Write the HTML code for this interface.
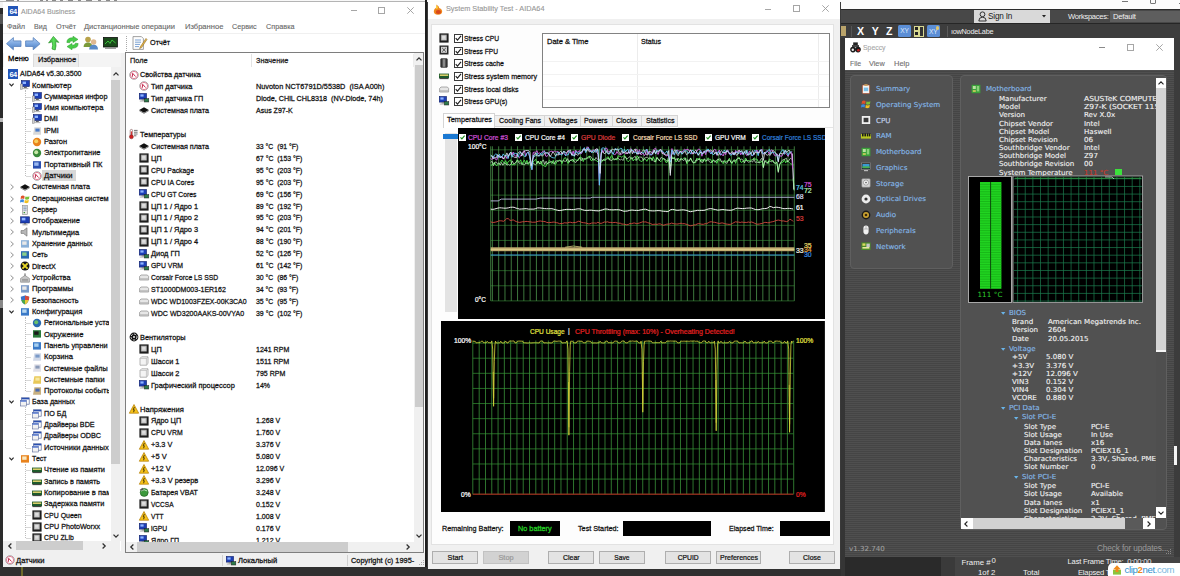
<!DOCTYPE html>
<html lang="ru"><head><meta charset="utf-8"><title>AIDA64 Business</title>
<style>
html,body{margin:0;padding:0;}
body{width:1180px;height:576px;overflow:hidden;background:#3a3a3a;font-family:"Liberation Sans",sans-serif;}
#root{position:relative;width:1180px;height:576px;overflow:hidden;background:#3a3a3a;}
.a{position:absolute;display:block;box-sizing:border-box;white-space:pre;}
span.a{transform-origin:0 50%;}
svg.a{overflow:visible;}
.t{font-size:7.8px;color:#111;-webkit-text-stroke-width:0.26px;}
.tt{font-size:7.9px;color:#979797;-webkit-text-stroke-width:0.12px;}
.tm{font-size:7.9px;color:#686868;-webkit-text-stroke-width:0.12px;}
.ts{font-size:7.8px;color:#111;-webkit-text-stroke-width:0.26px;}
.tb{font-size:7.8px;color:#111;-webkit-text-stroke-width:0.24px;}
.tc{font-size:7.3px;color:#fff;-webkit-text-stroke-width:0.24px;}
.sp{font-family:"DejaVu Sans","Liberation Sans",sans-serif;font-size:6.9px;color:#f2f2f2;-webkit-text-stroke-width:0.12px;}
.spn{font-family:"DejaVu Sans","Liberation Sans",sans-serif;font-size:6.9px;color:#84b6e6;-webkit-text-stroke-width:0.15px;}
.mx{font-size:8.2px;color:#eee;}

</style></head>
<body>
<div id="root">
<div class="a" style="left:0.00px;top:8.00px;width:5.00px;height:568.00px;background:#2c2c2c;"></div>
<div class="a" style="left:0.00px;top:0.00px;width:5.00px;height:8.00px;background:#f4f4f4;"></div>
<div class="a" style="left:0.00px;top:14.00px;width:2.50px;height:10.00px;background:#555;"></div>
<div class="a" style="left:0.00px;top:40.00px;width:2.50px;height:30.00px;background:#1c1c1c;"></div>
<div class="a" style="left:0.00px;top:118.00px;width:2.50px;height:4.00px;background:#bbb;"></div>
<div class="a" style="left:0.00px;top:150.00px;width:2.50px;height:40.00px;background:#3a3a3a;"></div>
<div class="a" style="left:0.00px;top:300.00px;width:2.50px;height:8.00px;background:#888;"></div>
<div class="a" style="left:0.00px;top:420.00px;width:2.50px;height:20.00px;background:#444;"></div>
<div class="a" style="left:0.00px;top:0.00px;width:841.00px;height:2.40px;background:#f8f8f8;"></div>
<div class="a" style="left:0.00px;top:1.20px;width:425.00px;height:0.80px;background:#b4b4b4;"></div>
<div class="a" style="left:6.00px;top:0.00px;width:8.00px;height:1.00px;background:#8a8a8a;"></div>
<div class="a" style="left:17.00px;top:0.00px;width:2.00px;height:1.00px;background:#8a8a8a;"></div>
<div class="a" style="left:40.00px;top:0.00px;width:3.00px;height:1.00px;background:#8a8a8a;"></div>
<div class="a" style="left:46.00px;top:0.00px;width:2.00px;height:1.00px;background:#8a8a8a;"></div>
<div class="a" style="left:52.00px;top:0.00px;width:4.00px;height:1.00px;background:#8a8a8a;"></div>
<div class="a" style="left:60.00px;top:0.00px;width:3.00px;height:1.00px;background:#8a8a8a;"></div>
<div class="a" style="left:68.00px;top:0.00px;width:5.00px;height:1.00px;background:#8a8a8a;"></div>
<div class="a" style="left:78.00px;top:0.00px;width:3.00px;height:1.00px;background:#8a8a8a;"></div>
<div class="a" style="left:86.00px;top:0.00px;width:6.00px;height:1.00px;background:#8a8a8a;"></div>
<div class="a" style="left:98.00px;top:0.00px;width:3.00px;height:1.00px;background:#8a8a8a;"></div>
<div class="a" style="left:106.00px;top:0.00px;width:4.00px;height:1.00px;background:#8a8a8a;"></div>
<div class="a" style="left:114.00px;top:0.00px;width:3.00px;height:1.00px;background:#8a8a8a;"></div>
<div class="a" style="left:0.00px;top:566.60px;width:428.00px;height:10.00px;background:#303030;"></div>
<div class="a" style="left:428.00px;top:568.60px;width:413.00px;height:8.00px;background:#303030;"></div>
<div class="a" style="left:21.40px;top:566.60px;width:1.20px;height:10.00px;background:#6e6a2a;"></div>
<div class="a" style="left:424.90px;top:0.00px;width:2.60px;height:567.00px;background:#1e1e1e;"></div>
<div class="a" style="left:840.50px;top:0.00px;width:340.00px;height:9.40px;background:#fbfbfb;"></div>
<div class="a" style="left:1121.70px;top:1.20px;width:6.30px;height:0.90px;background:#777;"></div>
<div class="a" style="left:1150.00px;top:-1.00px;width:5.60px;height:5.00px;border:0.9px solid #777;border-radius:0 0 1px 1px;"></div>
<div class="a" style="left:1178.60px;top:2.60px;width:3.00px;height:0.90px;background:#777;"></div>
<div class="a" style="left:840.50px;top:9.40px;width:340.00px;height:14.20px;background:#484848;border-top:1.2px solid #2a2a2a;border-bottom:1.2px solid #262626;"></div>
<div class="a" style="left:974.40px;top:9.60px;width:75.60px;height:13.40px;background:#d9d9d9;"></div>
<svg class="a" style="left:977.50px;top:11.00px;" width="9" height="11" viewBox="0 0 9 11"><circle cx="4.5" cy="3.3" r="2.4" fill="none" stroke="#222" stroke-width="0.9"/><path d="M0.8 10 Q0.8 6.2 4.5 6.2 Q8.2 6.2 8.2 10 Z" fill="none" stroke="#222" stroke-width="0.9"/></svg>
<span class="a mx" style="left:988.00px;top:10.60px;line-height:12px;color:#1a1a1a;font-size:8.2px;letter-spacing:-0.2px;">Sign In</span>
<svg class="a" style="left:1041.50px;top:15.00px;" width="4" height="3" viewBox="0 0 4 3"><path d="M0 0 L4 0 L2 2.6 Z" fill="#222"/></svg>
<span class="a mx" style="left:1068.00px;top:10.60px;line-height:12px;color:#f2f2f2;font-size:7.6px;letter-spacing:-0.3px;">Workspaces:</span>
<div class="a" style="left:1109.70px;top:10.60px;width:71.00px;height:11.80px;background:#5e5e5e;"></div>
<span class="a mx" style="left:1113.00px;top:10.60px;line-height:12px;color:#f2f2f2;font-size:7.6px;letter-spacing:-0.2px;">Default</span>
<div class="a" style="left:840.50px;top:23.60px;width:340.00px;height:14.60px;background:#3d3d3d;"></div>
<div class="a" style="left:840.50px;top:26.00px;width:5.00px;height:10.00px;background:#b9a36a;"></div>
<div class="a" style="left:850.50px;top:25.50px;width:1.20px;height:11.50px;background:#555;"></div>
<span class="a mx" style="left:857.00px;top:25.30px;line-height:12px;color:#fff;font-size:10.6px;font-weight:bold;">X</span>
<span class="a mx" style="left:871.80px;top:25.30px;line-height:12px;color:#fff;font-size:10.6px;font-weight:bold;">Y</span>
<span class="a mx" style="left:886.00px;top:25.30px;line-height:12px;color:#fff;font-size:10.6px;font-weight:bold;">Z</span>
<div class="a" style="left:898.00px;top:25.00px;width:13.00px;height:12.40px;background:#5b8ed6;border-radius:1.5px;"></div>
<span class="a mx" style="left:900.30px;top:25.40px;line-height:12px;color:#dfe9fa;font-size:6.6px;letter-spacing:-0.2px;">XY</span>
<div class="a" style="left:913.60px;top:25.60px;width:10.40px;height:11.20px;background:#d8d890;"></div>
<div class="a" style="left:915.00px;top:27.00px;width:3.00px;height:3.00px;background:#222;"></div>
<div class="a" style="left:915.00px;top:32.00px;width:3.00px;height:3.00px;background:#222;"></div>
<div class="a" style="left:919.60px;top:26.60px;width:3.40px;height:9.20px;background:#333;"></div>
<div class="a" style="left:927.00px;top:25.00px;width:13.00px;height:12.40px;background:#5b8ed6;border-radius:1.5px;"></div>
<span class="a mx" style="left:929.00px;top:25.60px;line-height:12px;color:#dfe9fa;font-size:6.6px;letter-spacing:-0.2px;">XY</span>
<div class="a" style="left:935.50px;top:26.00px;width:3.60px;height:4.00px;background:#e2c46a;border-radius:2px;"></div>
<div class="a" style="left:947.00px;top:25.60px;width:1.20px;height:11.40px;background:#5a5a5a;"></div>
<span class="a mx" style="left:951.00px;top:26.00px;line-height:12px;color:#eee;font-size:7.3px;letter-spacing:-0.25px;">ıowNodeLabe</span>
<div class="a" style="left:840.50px;top:38.20px;width:4.60px;height:538.00px;background:#353535;"></div>
<div class="a" style="left:1174.30px;top:38.20px;width:6.00px;height:538.00px;background:#3c3c3c;"></div>
<div class="a" style="left:1174.40px;top:446.00px;width:2.60px;height:18.50px;background:#f4f4f4;"></div>
<div class="a" style="left:845.00px;top:557.00px;width:96.00px;height:19.00px;background:#2a2a2a;"></div>
<div class="a" style="left:941.00px;top:557.00px;width:14.00px;height:19.00px;background:#3a3a3a;"></div>
<div class="a" style="left:955.00px;top:557.00px;width:225.00px;height:19.00px;background:#444;"></div>
<span class="a mx" style="left:961.50px;top:556.60px;line-height:12px;color:#f0f0f0;font-size:7.8px;">Frame #</span>
<span class="a mx" style="left:991.50px;top:555.40px;line-height:12px;color:#f0f0f0;font-size:7.8px;">0</span>
<span class="a mx" style="left:978.00px;top:567.00px;line-height:12px;color:#f0f0f0;font-size:7.8px;">1of 2</span>
<span class="a mx" style="left:1023.00px;top:566.60px;line-height:12px;color:#f0f0f0;font-size:7.8px;">Total</span>
<span class="a mx" style="left:1067.60px;top:555.60px;line-height:12px;color:#f0f0f0;font-size:7.6px;letter-spacing:-0.2px;">Last Frame Time:  0:00:00</span>
<span class="a mx" style="left:1078.00px;top:567.00px;line-height:12px;color:#f0f0f0;font-size:7.6px;letter-spacing:-0.2px;">Elapsed T</span>
<div class="a" style="left:1107.80px;top:563.00px;width:73.00px;height:13.00px;background:#fff;border-radius:5px 0 0 0;"></div>
<svg class="a" style="left:1112.00px;top:564.50px;" width="10" height="10" viewBox="0 0 10 10"><rect x="1" y="5" width="8" height="4.6" fill="#8cc43c"/><path d="M5 0.2 L9 4.4 L6.4 4.4 L6.4 7 L3.6 7 L3.6 4.4 L1 4.4 Z" fill="#f08a1c"/></svg>
<span class="a" style="left:1124.5px;top:564.6px;line-height:10px;font-size:9.6px;letter-spacing:-0.35px;color:#2d8fd0;">clip<b style="color:#f08a1c">2</b>net<span style="color:#7ab8e0">.com</span></span>
<div class="a" style="left:3.20px;top:2.00px;width:421.70px;height:564.60px;background:#ffffff;"></div>
<svg class="a" style="left:7.50px;top:6.00px;" width="10" height="10" viewBox="0 0 10 10"><rect x="0" y="0" width="10" height="10" fill="#2456b8"/><text x="5" y="7.9" font-family="Liberation Sans,sans-serif" font-weight="bold" font-size="7.4" fill="#fff" text-anchor="middle" letter-spacing="-0.5">64</text></svg>
<span class="a tt" style="left:21.00px;top:5.60px;line-height:12px;transform:scaleX(0.885);">AIDA64 Business</span>
<div class="a" style="left:350.60px;top:10.40px;width:6.00px;height:0.90px;background:#a6a6a6;"></div>
<div class="a" style="left:378.00px;top:7.00px;width:6.60px;height:6.60px;border:0.9px solid #a6a6a6;"></div>
<svg class="a" style="left:407.00px;top:7.00px;" width="7" height="7" viewBox="0 0 7 7"><path d="M0.3 0.3 L6.7 6.7 M6.7 0.3 L0.3 6.7" stroke="#9c9c9c" stroke-width="0.9"/></svg>
<span class="a tm" style="left:7.00px;top:21.00px;line-height:12px;transform:scaleX(0.935);">Файл</span>
<span class="a tm" style="left:34.00px;top:21.00px;line-height:12px;transform:scaleX(0.896);">Вид</span>
<span class="a tm" style="left:55.70px;top:21.00px;line-height:12px;transform:scaleX(0.921);">Отчёт</span>
<span class="a tm" style="left:84.00px;top:21.00px;line-height:12px;transform:scaleX(0.954);">Дистанционные операции</span>
<span class="a tm" style="left:184.70px;top:21.00px;line-height:12px;transform:scaleX(0.959);">Избранное</span>
<span class="a tm" style="left:232.40px;top:21.00px;line-height:12px;transform:scaleX(0.911);">Сервис</span>
<span class="a tm" style="left:266.00px;top:21.00px;line-height:12px;transform:scaleX(0.922);">Справка</span>
<div class="a" style="left:3.20px;top:32.60px;width:421.70px;height:0.80px;background:#f0f0f0;"></div>
<svg class="a" style="left:0;top:0" width="0" height="0"><defs><linearGradient id="gb" x1="0" y1="0" x2="0" y2="1"><stop offset="0" stop-color="#b4d0f4"/><stop offset="0.5" stop-color="#7aa6e0"/><stop offset="1" stop-color="#4a7cc0"/></linearGradient><linearGradient id="gg" x1="0" y1="0" x2="1" y2="0"><stop offset="0" stop-color="#2fae2f"/><stop offset="0.5" stop-color="#5ce05c"/><stop offset="1" stop-color="#2a9a2a"/></linearGradient></defs></svg>
<svg class="a" style="left:5.80px;top:36.60px;" width="15.6" height="13.4" viewBox="0 0 15.6 13.4"><path d="M0.5 6.7 L7.4 0.6 L7.4 3.9 L15 3.9 L15 9.5 L7.4 9.5 L7.4 12.8 Z" fill="url(#gb)" stroke="#5580bc" stroke-width="0.8" stroke-linejoin="round"/></svg>
<svg class="a" style="left:24.80px;top:36.60px;" width="15.6" height="13.4" viewBox="0 0 15.6 13.4"><path d="M15.1 6.7 L8.2 0.6 L8.2 3.9 L0.6 3.9 L0.6 9.5 L8.2 9.5 L8.2 12.8 Z" fill="url(#gb)" stroke="#5580bc" stroke-width="0.8" stroke-linejoin="round"/></svg>
<svg class="a" style="left:47.60px;top:36.00px;" width="12" height="14.4" viewBox="0 0 12 14.4"><path d="M5.4 0.4 L10.8 6.4 L7.6 5.6 Q8.6 10 7.2 14 L4 13 Q5.2 9.4 4.2 5.8 L0.6 7 Z" fill="url(#gg)" stroke="#2a962a" stroke-width="0.7" stroke-linejoin="round"/></svg>
<svg class="a" style="left:65.50px;top:36.00px;" width="13" height="14" viewBox="0 0 13 14"><path d="M0.8 6.4 Q1.2 1.4 7 1.8 L7 0.2 L12 3.4 L7 6.6 L7 4.8 Q3.8 4.6 3.6 6.8 Z" fill="#48cc48" stroke="#2a9a2a" stroke-width="0.5"/><path d="M12.2 7.6 Q11.8 12.6 6 12.2 L6 13.8 L1 10.6 L6 7.4 L6 9.2 Q9.2 9.4 9.4 7.2 Z" fill="#48cc48" stroke="#2a9a2a" stroke-width="0.5"/></svg>
<svg class="a" style="left:83.00px;top:36.00px;" width="16" height="14" viewBox="0 0 16 14"><circle cx="5" cy="3.6" r="2.8" fill="#b8a24a"/><path d="M0.6 11 Q0.6 6.4 5 6.4 Q9.4 6.4 9.4 11 Z" fill="#7a9a3a"/><circle cx="10.6" cy="6" r="2.7" fill="#e0b890"/><path d="M6.2 13.6 Q6.2 8.8 10.6 8.8 Q15 8.8 15 13.6 Z" fill="#5a8ac8"/></svg>
<svg class="a" style="left:103.00px;top:37.00px;" width="15" height="12" viewBox="0 0 15 12"><rect x="0.4" y="0.4" width="14" height="9.6" fill="#1a4a1a" stroke="#111" stroke-width="0.8"/><path d="M2 7 L5 4 L7 6.4 L9 3 L12.6 6" fill="none" stroke="#3fd03f" stroke-width="0.9"/><rect x="2" y="10.4" width="11" height="1.4" fill="#888"/></svg>
<div class="a" style="left:125.60px;top:36.40px;width:0.90px;height:0.90px;background:#aaa;"></div>
<div class="a" style="left:125.60px;top:38.30px;width:0.90px;height:0.90px;background:#aaa;"></div>
<div class="a" style="left:125.60px;top:40.20px;width:0.90px;height:0.90px;background:#aaa;"></div>
<div class="a" style="left:125.60px;top:42.10px;width:0.90px;height:0.90px;background:#aaa;"></div>
<div class="a" style="left:125.60px;top:44.00px;width:0.90px;height:0.90px;background:#aaa;"></div>
<div class="a" style="left:125.60px;top:45.90px;width:0.90px;height:0.90px;background:#aaa;"></div>
<div class="a" style="left:125.60px;top:47.80px;width:0.90px;height:0.90px;background:#aaa;"></div>
<div class="a" style="left:125.60px;top:49.70px;width:0.90px;height:0.90px;background:#aaa;"></div>
<svg class="a" style="left:132.00px;top:36.00px;" width="15" height="14" viewBox="0 0 15 14"><path d="M1 0.6 L9.4 0.6 L11.4 2.6 L11.4 13.4 L1 13.4 Z" fill="#fdfdfd" stroke="#8a8a8a" stroke-width="0.8"/><path d="M3 4 h6 M3 6.2 h6 M3 8.4 h5 M3 10.6 h4" stroke="#5a8ac8" stroke-width="0.8"/><path d="M14 2.4 L8.4 10.6 L7.6 12.6 L9.6 11.6 L15 3.4 Z" fill="#e8b848" stroke="#7a5a1a" stroke-width="0.5"/></svg>
<span class="a t" style="left:150.00px;top:37.00px;line-height:12px;transform:scaleX(0.929);">Отчёт</span>
<div class="a" style="left:3.20px;top:52.60px;width:121.40px;height:14.00px;background:#f4f4f4;"></div>
<div class="a" style="left:3.60px;top:52.60px;width:29.60px;height:14.00px;background:#ffffff;"></div>
<div class="a" style="left:33.20px;top:53.60px;width:46.00px;height:13.00px;background:#ececec;border:0.8px solid #dcdcdc;border-bottom:none;"></div>
<span class="a t" style="left:8.00px;top:53.40px;line-height:12px;color:#000;transform:scaleX(0.979);">Меню</span>
<span class="a t" style="left:38.00px;top:53.80px;line-height:12px;color:#111;transform:scaleX(0.967);">Избранное</span>
<div class="a" style="left:120.60px;top:52.60px;width:4.80px;height:501.00px;background:#f0f0f0;"></div>
<div class="a" style="left:3.20px;top:66.60px;width:107.60px;height:474.40px;background:#ffffff;"></div>
<div class="a" style="left:3.6px;top:66.6px;width:105.9px;height:474.6px;overflow:hidden;">
<svg class="a" style="left:4.00px;top:2.40px;" width="10" height="10" viewBox="0 0 10 10"><rect x="0" y="0" width="10" height="10" fill="#2456b8"/><text x="5" y="7.9" font-family="Liberation Sans,sans-serif" font-weight="bold" font-size="7.4" fill="#fff" text-anchor="middle" letter-spacing="-0.5">64</text></svg>
<span class="a ts" style="left:16.20px;top:1.60px;line-height:12px;transform:scaleX(0.91);">AIDA64 v5.30.3500</span>
<svg class="a" style="left:16.60px;top:13.72px;" width="10" height="10" viewBox="0 0 10 10"><rect x="1.4" y="0.6" width="8" height="6" fill="#1d3fb5" stroke="#0b1b66" stroke-width="0.6"/><rect x="2.6" y="1.6" width="3.4" height="2.4" fill="#8fb4ff"/><rect x="3.8" y="6.8" width="3" height="1.2" fill="#666"/><rect x="0.2" y="4" width="2.4" height="5.4" fill="#cfcfcf" stroke="#777" stroke-width="0.4"/><rect x="2.4" y="8.2" width="6" height="0.9" fill="#aaa"/></svg>
<svg class="a" style="left:5.80px;top:16.72px;" width="5" height="4" viewBox="0 0 5 4"><path d="M0.4 0.6 L2.5 3 L4.6 0.6" fill="none" stroke="#2a2a2a" stroke-width="1.15"/></svg>
<span class="a ts" style="left:28.50px;top:12.92px;line-height:12px;transform:scaleX(0.978);">Компьютер</span>
<div class="a" style="left:22.60px;top:30.04px;width:5.00px;height:0.70px;background:#d8d8d8;"></div>
<svg class="a" style="left:28.60px;top:25.04px;" width="10" height="10" viewBox="0 0 10 10"><rect x="1.4" y="0.6" width="8" height="6" fill="#1d3fb5" stroke="#0b1b66" stroke-width="0.6"/><rect x="2.6" y="1.6" width="3.4" height="2.4" fill="#8fb4ff"/><rect x="3.8" y="6.8" width="3" height="1.2" fill="#666"/><rect x="0.2" y="4" width="2.4" height="5.4" fill="#cfcfcf" stroke="#777" stroke-width="0.4"/><rect x="2.4" y="8.2" width="6" height="0.9" fill="#aaa"/></svg>
<span class="a ts" style="left:40.50px;top:24.24px;line-height:12px;transform:scaleX(0.939);">Суммарная инфор</span>
<div class="a" style="left:22.60px;top:41.36px;width:5.00px;height:0.70px;background:#d8d8d8;"></div>
<svg class="a" style="left:28.60px;top:36.36px;" width="10" height="10" viewBox="0 0 10 10"><rect x="1.4" y="0.6" width="8" height="6" fill="#1d3fb5" stroke="#0b1b66" stroke-width="0.6"/><rect x="2.6" y="1.6" width="3.4" height="2.4" fill="#8fb4ff"/><rect x="3.8" y="6.8" width="3" height="1.2" fill="#666"/><rect x="0.2" y="4" width="2.4" height="5.4" fill="#cfcfcf" stroke="#777" stroke-width="0.4"/><rect x="2.4" y="8.2" width="6" height="0.9" fill="#aaa"/></svg>
<span class="a ts" style="left:40.50px;top:35.56px;line-height:12px;transform:scaleX(0.974);">Имя компьютера</span>
<div class="a" style="left:22.60px;top:52.68px;width:5.00px;height:0.70px;background:#d8d8d8;"></div>
<svg class="a" style="left:28.60px;top:47.68px;" width="10" height="10" viewBox="0 0 10 10"><rect x="1.4" y="0.6" width="8" height="6" fill="#1d3fb5" stroke="#0b1b66" stroke-width="0.6"/><rect x="2.6" y="1.6" width="3.4" height="2.4" fill="#8fb4ff"/><rect x="3.8" y="6.8" width="3" height="1.2" fill="#666"/><rect x="0.2" y="4" width="2.4" height="5.4" fill="#cfcfcf" stroke="#777" stroke-width="0.4"/><rect x="2.4" y="8.2" width="6" height="0.9" fill="#aaa"/></svg>
<span class="a ts" style="left:40.50px;top:46.88px;line-height:12px;transform:scaleX(0.968);">DMI</span>
<div class="a" style="left:22.60px;top:64.00px;width:5.00px;height:0.70px;background:#d8d8d8;"></div>
<svg class="a" style="left:28.60px;top:59.00px;" width="10" height="10" viewBox="0 0 10 10"><path d="M1 8.8 L2.4 1.2 L9 1.2 L9 8.8 Z" fill="#d8d8d8"/><rect x="3.4" y="2.6" width="4.2" height="3" fill="#4a7ac8"/></svg>
<span class="a ts" style="left:40.50px;top:58.20px;line-height:12px;transform:scaleX(0.921);">IPMI</span>
<div class="a" style="left:22.60px;top:75.32px;width:5.00px;height:0.70px;background:#d8d8d8;"></div>
<svg class="a" style="left:28.60px;top:70.32px;" width="10" height="10" viewBox="0 0 10 10"><circle cx="5" cy="5" r="4.2" fill="#e8821c"/><circle cx="4.2" cy="4.2" r="2" fill="#f8d060"/></svg>
<span class="a ts" style="left:40.50px;top:69.52px;line-height:12px;transform:scaleX(0.959);">Разгон</span>
<div class="a" style="left:22.60px;top:86.64px;width:5.00px;height:0.70px;background:#d8d8d8;"></div>
<svg class="a" style="left:28.60px;top:81.64px;" width="10" height="10" viewBox="0 0 10 10"><circle cx="5" cy="5" r="4.2" fill="#3a8a3a"/><circle cx="4.2" cy="4.2" r="2" fill="#c8e8a8"/></svg>
<span class="a ts" style="left:40.50px;top:80.84px;line-height:12px;transform:scaleX(0.95);">Электропитание</span>
<div class="a" style="left:22.60px;top:97.96px;width:5.00px;height:0.70px;background:#d8d8d8;"></div>
<svg class="a" style="left:28.60px;top:92.96px;" width="10" height="10" viewBox="0 0 10 10"><rect x="1" y="1.2" width="8" height="7.4" fill="#2a4fb0"/><rect x="2.2" y="2.4" width="4.4" height="3.4" fill="#9ab8f0"/></svg>
<span class="a ts" style="left:40.50px;top:92.16px;line-height:12px;transform:scaleX(0.968);">Портативный ПК</span>
<div class="a" style="left:38.90px;top:103.48px;width:33.40px;height:11.40px;background:#d8d8d8;"></div>
<div class="a" style="left:22.60px;top:109.28px;width:5.00px;height:0.70px;background:#d8d8d8;"></div>
<svg class="a" style="left:28.60px;top:104.28px;" width="10" height="10" viewBox="0 0 10 10"><circle cx="5" cy="5" r="4.35" fill="#fff" stroke="#7a7a7a" stroke-width="0.6"/><circle cx="5" cy="5" r="3.6" fill="none" stroke="#e0708a" stroke-width="0.9"/><path d="M3.3 6.8 L3.7 3.3 L6.5 6.5" fill="none" stroke="#c02044" stroke-width="0.95" stroke-linejoin="round"/></svg>
<span class="a ts" style="left:40.50px;top:103.48px;line-height:12px;transform:scaleX(0.979);">Датчики</span>
<svg class="a" style="left:16.60px;top:115.60px;" width="10" height="10" viewBox="0 0 10 10"><path d="M0.2 5 L5 2.2 L9.8 5 L5 7.8 Z" fill="#111"/><path d="M0.2 5.6 L5 8.4 L9.8 5.6" fill="none" stroke="#555" stroke-width="0.7"/></svg>
<svg class="a" style="left:6.20px;top:117.60px;" width="4.4" height="6" viewBox="0 0 4.4 6"><path d="M0.6 0.4 L3.4 3 L0.6 5.6" fill="none" stroke="#8c8c8c" stroke-width="1"/></svg>
<span class="a ts" style="left:28.50px;top:114.80px;line-height:12px;transform:scaleX(0.921);">Системная плата</span>
<svg class="a" style="left:16.60px;top:126.92px;" width="10" height="10" viewBox="0 0 10 10"><path d="M1 2.2 Q3 1 4.6 2.2 L4.2 5 Q2.6 3.8 0.6 5 Z" fill="#e0502a"/><path d="M5.4 2.4 Q7.4 3.4 9.4 2.2 L9 5 Q7 6.2 5 5.2 Z" fill="#7ac03a"/><path d="M0.4 5.8 Q2.4 4.6 4 5.8 L3.6 8.6 Q2 7.4 0 8.6 Z" fill="#3a8ae0"/><path d="M4.8 6 Q6.8 7 8.8 5.8 L8.4 8.6 Q6.4 9.8 4.4 8.8 Z" fill="#f0c020"/></svg>
<svg class="a" style="left:6.20px;top:128.92px;" width="4.4" height="6" viewBox="0 0 4.4 6"><path d="M0.6 0.4 L3.4 3 L0.6 5.6" fill="none" stroke="#8c8c8c" stroke-width="1"/></svg>
<span class="a ts" style="left:28.50px;top:126.12px;line-height:12px;transform:scaleX(0.944);">Операционная систем</span>
<svg class="a" style="left:16.60px;top:138.24px;" width="10" height="10" viewBox="0 0 10 10"><rect x="2.6" y="0.4" width="4.8" height="9.2" fill="#e4e4e4" stroke="#8a8a8a" stroke-width="0.6"/><path d="M3.4 2 h3.2 M3.4 3.6 h3.2 M3.4 5.2 h3.2" stroke="#6a8ab0" stroke-width="0.7"/><rect x="3.6" y="7" width="1.4" height="1.2" fill="#3a9a3a"/></svg>
<svg class="a" style="left:6.20px;top:140.24px;" width="4.4" height="6" viewBox="0 0 4.4 6"><path d="M0.6 0.4 L3.4 3 L0.6 5.6" fill="none" stroke="#8c8c8c" stroke-width="1"/></svg>
<span class="a ts" style="left:28.50px;top:137.44px;line-height:12px;transform:scaleX(0.927);">Сервер</span>
<svg class="a" style="left:16.60px;top:149.56px;" width="10" height="10" viewBox="0 0 10 10"><rect x="0.6" y="0.8" width="8.8" height="6.2" fill="#1d3fb5" stroke="#0b1b66" stroke-width="0.6"/><rect x="1.8" y="1.8" width="3.6" height="2.6" fill="#8fb4ff"/><rect x="3.8" y="7.2" width="2.4" height="1.2" fill="#666"/><rect x="2.4" y="8.4" width="5.2" height="0.9" fill="#999"/></svg>
<svg class="a" style="left:6.20px;top:151.56px;" width="4.4" height="6" viewBox="0 0 4.4 6"><path d="M0.6 0.4 L3.4 3 L0.6 5.6" fill="none" stroke="#8c8c8c" stroke-width="1"/></svg>
<span class="a ts" style="left:28.50px;top:148.76px;line-height:12px;transform:scaleX(0.965);">Отображение</span>
<svg class="a" style="left:16.60px;top:160.88px;" width="10" height="10" viewBox="0 0 10 10"><path d="M1 3.6 L3.4 3.6 L7 0.8 L7 9.2 L3.4 6.4 L1 6.4 Z" fill="#b8b8b8" stroke="#6a6a6a" stroke-width="0.6"/></svg>
<svg class="a" style="left:6.20px;top:162.88px;" width="4.4" height="6" viewBox="0 0 4.4 6"><path d="M0.6 0.4 L3.4 3 L0.6 5.6" fill="none" stroke="#8c8c8c" stroke-width="1"/></svg>
<span class="a ts" style="left:28.50px;top:160.08px;line-height:12px;transform:scaleX(0.964);">Мультимедиа</span>
<svg class="a" style="left:16.60px;top:172.20px;" width="10" height="10" viewBox="0 0 10 10"><rect x="1" y="1.2" width="8" height="7.4" fill="#8ab0d8"/><rect x="2.2" y="2.4" width="4.4" height="3.4" fill="#e8e8e8"/></svg>
<svg class="a" style="left:6.20px;top:174.20px;" width="4.4" height="6" viewBox="0 0 4.4 6"><path d="M0.6 0.4 L3.4 3 L0.6 5.6" fill="none" stroke="#8c8c8c" stroke-width="1"/></svg>
<span class="a ts" style="left:28.50px;top:171.40px;line-height:12px;transform:scaleX(0.935);">Хранение данных</span>
<svg class="a" style="left:16.60px;top:183.52px;" width="10" height="10" viewBox="0 0 10 10"><rect x="1" y="1.2" width="8" height="7.4" fill="#2a6ab0"/><rect x="2.2" y="2.4" width="4.4" height="3.4" fill="#8ad08a"/></svg>
<svg class="a" style="left:6.20px;top:185.52px;" width="4.4" height="6" viewBox="0 0 4.4 6"><path d="M0.6 0.4 L3.4 3 L0.6 5.6" fill="none" stroke="#8c8c8c" stroke-width="1"/></svg>
<span class="a ts" style="left:28.50px;top:182.72px;line-height:12px;transform:scaleX(0.906);">Сеть</span>
<svg class="a" style="left:16.60px;top:194.84px;" width="10" height="10" viewBox="0 0 10 10"><circle cx="5" cy="5" r="4.5" fill="#151515"/><path d="M2.4 2.4 L7.6 7.6 M7.6 2.4 L2.4 7.6" stroke="#e8d828" stroke-width="1.9"/></svg>
<svg class="a" style="left:6.20px;top:196.84px;" width="4.4" height="6" viewBox="0 0 4.4 6"><path d="M0.6 0.4 L3.4 3 L0.6 5.6" fill="none" stroke="#8c8c8c" stroke-width="1"/></svg>
<span class="a ts" style="left:28.50px;top:194.04px;line-height:12px;transform:scaleX(0.93);">DirectX</span>
<svg class="a" style="left:16.60px;top:206.16px;" width="10" height="10" viewBox="0 0 10 10"><path d="M0.6 9.2 L0.6 5.4 L5 2.4 L9.4 5.4 L9.4 9.2 Z" fill="#c8c8c8" stroke="#777" stroke-width="0.6"/><rect x="4.4" y="0.4" width="1.2" height="2.4" fill="#777"/><path d="M2 6.4 h6 M2 7.8 h6" stroke="#777" stroke-width="0.6"/></svg>
<svg class="a" style="left:6.20px;top:208.16px;" width="4.4" height="6" viewBox="0 0 4.4 6"><path d="M0.6 0.4 L3.4 3 L0.6 5.6" fill="none" stroke="#8c8c8c" stroke-width="1"/></svg>
<span class="a ts" style="left:28.50px;top:205.36px;line-height:12px;transform:scaleX(0.945);">Устройства</span>
<svg class="a" style="left:16.60px;top:217.48px;" width="10" height="10" viewBox="0 0 10 10"><rect x="1" y="1.2" width="8" height="7.4" fill="#7a9ac8"/><rect x="2.2" y="2.4" width="4.4" height="3.4" fill="#e8e8e8"/></svg>
<svg class="a" style="left:6.20px;top:219.48px;" width="4.4" height="6" viewBox="0 0 4.4 6"><path d="M0.6 0.4 L3.4 3 L0.6 5.6" fill="none" stroke="#8c8c8c" stroke-width="1"/></svg>
<span class="a ts" style="left:28.50px;top:216.68px;line-height:12px;transform:scaleX(0.979);">Программы</span>
<svg class="a" style="left:16.60px;top:228.80px;" width="10" height="10" viewBox="0 0 10 10"><path d="M5 0.6 L9.2 1.8 Q9.2 7.4 5 9.6 Q0.8 7.4 0.8 1.8 Z" fill="#3a72c8"/><path d="M5 0.6 L9.2 1.8 Q9.2 3.8 8.8 5 L5 5 Z" fill="#d84a3a"/><path d="M5 5 L8.8 5 Q8 8 5 9.6 Z" fill="#e8c838"/><path d="M5 5 L1.2 5 Q2 8 5 9.6 Z" fill="#4aa84a"/></svg>
<svg class="a" style="left:6.20px;top:230.80px;" width="4.4" height="6" viewBox="0 0 4.4 6"><path d="M0.6 0.4 L3.4 3 L0.6 5.6" fill="none" stroke="#8c8c8c" stroke-width="1"/></svg>
<span class="a ts" style="left:28.50px;top:228.00px;line-height:12px;transform:scaleX(0.937);">Безопасность</span>
<svg class="a" style="left:16.60px;top:240.12px;" width="10" height="10" viewBox="0 0 10 10"><rect x="1" y="1.2" width="8" height="7.4" fill="#3a7ac8"/><rect x="2.2" y="2.4" width="4.4" height="3.4" fill="#b8d8f0"/></svg>
<svg class="a" style="left:5.80px;top:243.12px;" width="5" height="4" viewBox="0 0 5 4"><path d="M0.4 0.6 L2.5 3 L4.6 0.6" fill="none" stroke="#2a2a2a" stroke-width="1.15"/></svg>
<span class="a ts" style="left:28.50px;top:239.32px;line-height:12px;transform:scaleX(0.96);">Конфигурация</span>
<div class="a" style="left:22.60px;top:256.44px;width:5.00px;height:0.70px;background:#d8d8d8;"></div>
<svg class="a" style="left:28.60px;top:251.44px;" width="10" height="10" viewBox="0 0 10 10"><circle cx="5" cy="5" r="4.2" fill="#2a6ab0"/><circle cx="4.2" cy="4.2" r="2" fill="#6ac06a"/></svg>
<span class="a ts" style="left:40.50px;top:250.64px;line-height:12px;transform:scaleX(0.939);">Региональные уста</span>
<div class="a" style="left:22.60px;top:267.76px;width:5.00px;height:0.70px;background:#d8d8d8;"></div>
<svg class="a" style="left:28.60px;top:262.76px;" width="10" height="10" viewBox="0 0 10 10"><rect x="1" y="1.2" width="8" height="7.4" fill="#2a7a3a"/><rect x="2.2" y="2.4" width="4.4" height="3.4" fill="#1a1a1a"/></svg>
<span class="a ts" style="left:40.50px;top:261.96px;line-height:12px;transform:scaleX(0.978);">Окружение</span>
<div class="a" style="left:22.60px;top:279.08px;width:5.00px;height:0.70px;background:#d8d8d8;"></div>
<svg class="a" style="left:28.60px;top:274.08px;" width="10" height="10" viewBox="0 0 10 10"><rect x="1" y="1.2" width="8" height="7.4" fill="#3a7ac8"/><rect x="2.2" y="2.4" width="4.4" height="3.4" fill="#a8d0f0"/></svg>
<span class="a ts" style="left:40.50px;top:273.28px;line-height:12px;transform:scaleX(0.943);">Панель управлени</span>
<div class="a" style="left:22.60px;top:290.40px;width:5.00px;height:0.70px;background:#d8d8d8;"></div>
<svg class="a" style="left:28.60px;top:285.40px;" width="10" height="10" viewBox="0 0 10 10"><path d="M1 8.8 L2.4 1.2 L9 1.2 L9 8.8 Z" fill="#d0d8e8"/><rect x="3.4" y="2.6" width="4.2" height="3" fill="#7a9ac8"/></svg>
<span class="a ts" style="left:40.50px;top:284.60px;line-height:12px;transform:scaleX(0.971);">Корзина</span>
<div class="a" style="left:22.60px;top:301.72px;width:5.00px;height:0.70px;background:#d8d8d8;"></div>
<svg class="a" style="left:28.60px;top:296.72px;" width="10" height="10" viewBox="0 0 10 10"><path d="M1 8.8 L2.4 1.2 L9 1.2 L9 8.8 Z" fill="#e0e0e8"/><rect x="3.4" y="2.6" width="4.2" height="3" fill="#8a9ab8"/></svg>
<span class="a ts" style="left:40.50px;top:295.92px;line-height:12px;transform:scaleX(0.926);">Системные файлы</span>
<div class="a" style="left:22.60px;top:313.04px;width:5.00px;height:0.70px;background:#d8d8d8;"></div>
<svg class="a" style="left:28.60px;top:308.04px;" width="10" height="10" viewBox="0 0 10 10"><path d="M1 8.8 L2.4 1.2 L9 1.2 L9 8.8 Z" fill="#e8c858"/><rect x="3.4" y="2.6" width="4.2" height="3" fill="#f8e8a0"/></svg>
<span class="a ts" style="left:40.50px;top:307.24px;line-height:12px;transform:scaleX(0.947);">Системные папки</span>
<div class="a" style="left:22.60px;top:324.36px;width:5.00px;height:0.70px;background:#d8d8d8;"></div>
<svg class="a" style="left:28.60px;top:319.36px;" width="10" height="10" viewBox="0 0 10 10"><path d="M1 8.8 L2.4 1.2 L9 1.2 L9 8.8 Z" fill="#c8b080"/><rect x="3.4" y="2.6" width="4.2" height="3" fill="#4a6ab0"/></svg>
<span class="a ts" style="left:40.50px;top:318.56px;line-height:12px;transform:scaleX(0.978);">Протоколы событь</span>
<svg class="a" style="left:16.60px;top:330.68px;" width="10" height="10" viewBox="0 0 10 10"><rect x="1.6" y="0.8" width="7.6" height="6.4" fill="#fff" stroke="#5a6a9a" stroke-width="0.7"/><rect x="1.6" y="0.8" width="7.6" height="1.6" fill="#2a4fb0"/><rect x="0.4" y="3.4" width="6" height="5.6" fill="#f2f2f2" stroke="#5a6a9a" stroke-width="0.6"/><rect x="0.4" y="3.4" width="6" height="1.3" fill="#4a6fd0"/></svg>
<svg class="a" style="left:5.80px;top:333.68px;" width="5" height="4" viewBox="0 0 5 4"><path d="M0.4 0.6 L2.5 3 L4.6 0.6" fill="none" stroke="#2a2a2a" stroke-width="1.15"/></svg>
<span class="a ts" style="left:28.50px;top:329.88px;line-height:12px;transform:scaleX(0.92);">База данных</span>
<div class="a" style="left:22.60px;top:347.00px;width:5.00px;height:0.70px;background:#d8d8d8;"></div>
<svg class="a" style="left:28.60px;top:342.00px;" width="10" height="10" viewBox="0 0 10 10"><rect x="1.6" y="0.8" width="7.6" height="6.4" fill="#fff" stroke="#5a6a9a" stroke-width="0.7"/><rect x="1.6" y="0.8" width="7.6" height="1.6" fill="#2a4fb0"/><rect x="0.4" y="3.4" width="6" height="5.6" fill="#f2f2f2" stroke="#5a6a9a" stroke-width="0.6"/><rect x="0.4" y="3.4" width="6" height="1.3" fill="#4a6fd0"/></svg>
<span class="a ts" style="left:40.50px;top:341.20px;line-height:12px;transform:scaleX(0.922);">ПО БД</span>
<div class="a" style="left:22.60px;top:358.32px;width:5.00px;height:0.70px;background:#d8d8d8;"></div>
<svg class="a" style="left:28.60px;top:353.32px;" width="10" height="10" viewBox="0 0 10 10"><rect x="1.6" y="0.8" width="7.6" height="6.4" fill="#fff" stroke="#5a6a9a" stroke-width="0.7"/><rect x="1.6" y="0.8" width="7.6" height="1.6" fill="#2a4fb0"/><rect x="0.4" y="3.4" width="6" height="5.6" fill="#f2f2f2" stroke="#5a6a9a" stroke-width="0.6"/><rect x="0.4" y="3.4" width="6" height="1.3" fill="#4a6fd0"/></svg>
<span class="a ts" style="left:40.50px;top:352.52px;line-height:12px;transform:scaleX(0.924);">Драйверы BDE</span>
<div class="a" style="left:22.60px;top:369.64px;width:5.00px;height:0.70px;background:#d8d8d8;"></div>
<svg class="a" style="left:28.60px;top:364.64px;" width="10" height="10" viewBox="0 0 10 10"><rect x="1.6" y="0.8" width="7.6" height="6.4" fill="#fff" stroke="#5a6a9a" stroke-width="0.7"/><rect x="1.6" y="0.8" width="7.6" height="1.6" fill="#2a4fb0"/><rect x="0.4" y="3.4" width="6" height="5.6" fill="#f2f2f2" stroke="#5a6a9a" stroke-width="0.6"/><rect x="0.4" y="3.4" width="6" height="1.3" fill="#4a6fd0"/></svg>
<span class="a ts" style="left:40.50px;top:363.84px;line-height:12px;transform:scaleX(0.931);">Драйверы ODBC</span>
<div class="a" style="left:22.60px;top:380.96px;width:5.00px;height:0.70px;background:#d8d8d8;"></div>
<svg class="a" style="left:28.60px;top:375.96px;" width="10" height="10" viewBox="0 0 10 10"><rect x="1.6" y="0.8" width="7.6" height="6.4" fill="#fff" stroke="#5a6a9a" stroke-width="0.7"/><rect x="1.6" y="0.8" width="7.6" height="1.6" fill="#2a4fb0"/><rect x="0.4" y="3.4" width="6" height="5.6" fill="#f2f2f2" stroke="#5a6a9a" stroke-width="0.6"/><rect x="0.4" y="3.4" width="6" height="1.3" fill="#4a6fd0"/></svg>
<span class="a ts" style="left:40.50px;top:375.16px;line-height:12px;transform:scaleX(0.968);">Источники данных</span>
<svg class="a" style="left:16.60px;top:387.28px;" width="10" height="10" viewBox="0 0 10 10"><rect x="1" y="1.2" width="8" height="7.4" fill="#e8821c"/><rect x="2.2" y="2.4" width="4.4" height="3.4" fill="#f8e8c0"/></svg>
<svg class="a" style="left:5.80px;top:390.28px;" width="5" height="4" viewBox="0 0 5 4"><path d="M0.4 0.6 L2.5 3 L4.6 0.6" fill="none" stroke="#2a2a2a" stroke-width="1.15"/></svg>
<span class="a ts" style="left:28.50px;top:386.48px;line-height:12px;transform:scaleX(0.899);">Тест</span>
<div class="a" style="left:22.60px;top:403.60px;width:5.00px;height:0.70px;background:#d8d8d8;"></div>
<svg class="a" style="left:28.60px;top:398.60px;" width="10" height="10" viewBox="0 0 10 10"><rect x="0" y="2.6" width="10" height="4.6" fill="#1e5a2c"/><rect x="0.8" y="3.4" width="8.4" height="1.6" fill="#d9cf6a"/><rect x="0.5" y="7.2" width="9" height="0.9" fill="#222"/></svg>
<span class="a ts" style="left:40.50px;top:397.80px;line-height:12px;transform:scaleX(0.947);">Чтение из памяти</span>
<div class="a" style="left:22.60px;top:414.92px;width:5.00px;height:0.70px;background:#d8d8d8;"></div>
<svg class="a" style="left:28.60px;top:409.92px;" width="10" height="10" viewBox="0 0 10 10"><rect x="0" y="2.6" width="10" height="4.6" fill="#1e5a2c"/><rect x="0.8" y="3.4" width="8.4" height="1.6" fill="#d9cf6a"/><rect x="0.5" y="7.2" width="9" height="0.9" fill="#222"/></svg>
<span class="a ts" style="left:40.50px;top:409.12px;line-height:12px;transform:scaleX(0.937);">Запись в память</span>
<div class="a" style="left:22.60px;top:426.24px;width:5.00px;height:0.70px;background:#d8d8d8;"></div>
<svg class="a" style="left:28.60px;top:421.24px;" width="10" height="10" viewBox="0 0 10 10"><rect x="0" y="2.6" width="10" height="4.6" fill="#1e5a2c"/><rect x="0.8" y="3.4" width="8.4" height="1.6" fill="#d9cf6a"/><rect x="0.5" y="7.2" width="9" height="0.9" fill="#222"/></svg>
<span class="a ts" style="left:40.50px;top:420.44px;line-height:12px;transform:scaleX(0.963);">Копирование в пам</span>
<div class="a" style="left:22.60px;top:437.56px;width:5.00px;height:0.70px;background:#d8d8d8;"></div>
<svg class="a" style="left:28.60px;top:432.56px;" width="10" height="10" viewBox="0 0 10 10"><rect x="0" y="2.6" width="10" height="4.6" fill="#1e5a2c"/><rect x="0.8" y="3.4" width="8.4" height="1.6" fill="#d9cf6a"/><rect x="0.5" y="7.2" width="9" height="0.9" fill="#222"/></svg>
<span class="a ts" style="left:40.50px;top:431.76px;line-height:12px;transform:scaleX(0.948);">Задержка памяти</span>
<div class="a" style="left:22.60px;top:448.88px;width:5.00px;height:0.70px;background:#d8d8d8;"></div>
<svg class="a" style="left:28.60px;top:443.88px;" width="10" height="10" viewBox="0 0 10 10"><rect x="0.4" y="0.4" width="9.2" height="9.2" fill="#1e1e1e"/><rect x="1.8" y="1.6" width="6" height="6" fill="#8a8a8a"/><rect x="2.5" y="2.3" width="4.8" height="4.8" fill="#c9c9c9"/><rect x="3.2" y="3" width="3" height="2.6" fill="#dedede"/></svg>
<span class="a ts" style="left:40.50px;top:443.08px;line-height:12px;transform:scaleX(0.895);">CPU Queen</span>
<div class="a" style="left:22.60px;top:460.20px;width:5.00px;height:0.70px;background:#d8d8d8;"></div>
<svg class="a" style="left:28.60px;top:455.20px;" width="10" height="10" viewBox="0 0 10 10"><rect x="0.4" y="0.4" width="9.2" height="9.2" fill="#1e1e1e"/><rect x="1.8" y="1.6" width="6" height="6" fill="#8a8a8a"/><rect x="2.5" y="2.3" width="4.8" height="4.8" fill="#c9c9c9"/><rect x="3.2" y="3" width="3" height="2.6" fill="#dedede"/></svg>
<span class="a ts" style="left:40.50px;top:454.40px;line-height:12px;transform:scaleX(0.921);">CPU PhotoWorxx</span>
<div class="a" style="left:22.60px;top:471.52px;width:5.00px;height:0.70px;background:#d8d8d8;"></div>
<svg class="a" style="left:28.60px;top:466.52px;" width="10" height="10" viewBox="0 0 10 10"><rect x="0.4" y="0.4" width="9.2" height="9.2" fill="#1e1e1e"/><rect x="1.8" y="1.6" width="6" height="6" fill="#8a8a8a"/><rect x="2.5" y="2.3" width="4.8" height="4.8" fill="#c9c9c9"/><rect x="3.2" y="3" width="3" height="2.6" fill="#dedede"/></svg>
<span class="a ts" style="left:40.50px;top:465.72px;line-height:12px;transform:scaleX(0.881);">CPU ZLib</span>
<div class="a" style="left:21.2px;top:23.7px;width:0;height:85.6px;border-left:0.8px dotted #bdbdbd;"></div>
<div class="a" style="left:21.2px;top:250.1px;width:0;height:74.2px;border-left:0.8px dotted #bdbdbd;"></div>
<div class="a" style="left:21.2px;top:340.7px;width:0;height:40.3px;border-left:0.8px dotted #bdbdbd;"></div>
<div class="a" style="left:21.2px;top:397.3px;width:0;height:74.2px;border-left:0.8px dotted #bdbdbd;"></div>
</div>
<div class="a" style="left:111.00px;top:66.60px;width:9.60px;height:474.40px;background:#f0f0f0;"></div>
<div class="a" style="left:111.40px;top:79.60px;width:8.80px;height:384.00px;background:#cdcdcd;"></div>
<svg class="a" style="left:113.00px;top:72.40px;" width="6" height="4" viewBox="0 0 6 4"><path d="M0.5 3.4 L3 0.8 L5.5 3.4" fill="none" stroke="#303030" stroke-width="1.25"/></svg>
<svg class="a" style="left:113.00px;top:533.60px;" width="6" height="4" viewBox="0 0 6 4"><path d="M0.5 0.6 L3 3.2 L5.5 0.6" fill="none" stroke="#303030" stroke-width="1.25"/></svg>
<div class="a" style="left:3.20px;top:541.00px;width:117.00px;height:9.60px;background:#f0f0f0;"></div>
<div class="a" style="left:16.00px;top:541.40px;width:67.00px;height:8.80px;background:#cdcdcd;"></div>
<svg class="a" style="left:8.40px;top:543.00px;" width="4" height="6" viewBox="0 0 4 6"><path d="M3.4 0.5 L0.8 3 L3.4 5.5" fill="none" stroke="#303030" stroke-width="1.25"/></svg>
<svg class="a" style="left:102.40px;top:543.00px;" width="4" height="6" viewBox="0 0 4 6"><path d="M0.6 0.5 L3.2 3 L0.6 5.5" fill="none" stroke="#303030" stroke-width="1.25"/></svg>
<div class="a" style="left:3.20px;top:550.60px;width:121.80px;height:2.60px;background:#f0f0f0;"></div>
<div class="a" style="left:125.40px;top:52.40px;width:298.20px;height:500.80px;background:#ffffff;border:0.9px solid #7e7e7e;"></div>
<span class="a t" style="left:130.00px;top:55.20px;line-height:12px;color:#222;transform:scaleX(0.942);">Поле</span>
<span class="a t" style="left:256.20px;top:55.20px;line-height:12px;color:#222;transform:scaleX(0.933);">Значение</span>
<div class="a" style="left:251.40px;top:54.00px;width:0.80px;height:13.00px;background:#e4e4e4;"></div>
<div class="a" style="left:412.60px;top:54.00px;width:0.80px;height:13.00px;background:#ececec;"></div>
<div class="a" style="left:126.4px;top:68.0px;width:288.0px;height:473.79999999999995px;overflow:hidden;">
<svg class="a" style="left:2.80px;top:1.50px;" width="10" height="10" viewBox="0 0 10 10"><circle cx="5" cy="5" r="4.35" fill="#fff" stroke="#7a7a7a" stroke-width="0.6"/><circle cx="5" cy="5" r="3.6" fill="none" stroke="#e0708a" stroke-width="0.9"/><path d="M3.3 6.8 L3.7 3.3 L6.5 6.5" fill="none" stroke="#c02044" stroke-width="0.95" stroke-linejoin="round"/></svg>
<span class="a t" style="left:14.00px;top:1.20px;line-height:12px;transform:scaleX(0.936);">Свойства датчика</span>
<svg class="a" style="left:13.00px;top:13.44px;" width="10" height="10" viewBox="0 0 10 10"><circle cx="5" cy="5" r="4.35" fill="#fff" stroke="#7a7a7a" stroke-width="0.6"/><circle cx="5" cy="5" r="3.6" fill="none" stroke="#e0708a" stroke-width="0.9"/><path d="M3.3 6.8 L3.7 3.3 L6.5 6.5" fill="none" stroke="#c02044" stroke-width="0.95" stroke-linejoin="round"/></svg>
<span class="a t" style="left:24.20px;top:13.14px;line-height:12px;transform:scaleX(0.947);">Тип датчика</span>
<span class="a t" style="left:129.80px;top:13.14px;line-height:12px;transform:scaleX(0.937);">Nuvoton NCT6791D/5538D  (ISA A00h)</span>
<svg class="a" style="left:13.00px;top:25.38px;" width="10" height="10" viewBox="0 0 10 10"><rect x="0.3" y="0.5" width="7.2" height="5.6" fill="#1d3fb5" stroke="#0b1b66" stroke-width="0.6"/><rect x="1.4" y="1.4" width="3.2" height="2.2" fill="#8fb4ff"/><rect x="2.6" y="6.3" width="2.6" height="1.2" fill="#777"/><rect x="5.2" y="5.6" width="4.6" height="3.4" fill="#2d7a4a" stroke="#222" stroke-width="0.5"/><rect x="0.8" y="7.6" width="4" height="0.9" fill="#aaa"/></svg>
<span class="a t" style="left:24.20px;top:25.08px;line-height:12px;transform:scaleX(0.937);">Тип датчика ГП</span>
<span class="a t" style="left:129.80px;top:25.08px;line-height:12px;transform:scaleX(0.925);">Diode, CHiL CHL8318  (NV-Diode, 74h)</span>
<svg class="a" style="left:13.00px;top:37.32px;" width="10" height="10" viewBox="0 0 10 10"><path d="M0.2 5 L5 2.2 L9.8 5 L5 7.8 Z" fill="#111"/><path d="M0.2 5.6 L5 8.4 L9.8 5.6" fill="none" stroke="#555" stroke-width="0.7"/></svg>
<span class="a t" style="left:24.20px;top:37.02px;line-height:12px;transform:scaleX(0.921);">Системная плата</span>
<span class="a t" style="left:129.80px;top:37.02px;line-height:12px;transform:scaleX(0.903);">Asus Z97-K</span>
<svg class="a" style="left:2.80px;top:61.20px;" width="10" height="10" viewBox="0 0 10 10"><rect x="1.2" y="0.4" width="2.4" height="6.6" rx="1.2" fill="#fff" stroke="#7a4a4a" stroke-width="0.6"/><rect x="1.9" y="2.4" width="1" height="4.8" fill="#d02020"/><circle cx="2.4" cy="7.8" r="2" fill="#d02020" stroke="#7a2a2a" stroke-width="0.5"/><path d="M5 1.4 h3.6 M5 3.2 h3.6 M5 5 h3.6 M5 6.8 h2.4" stroke="#333" stroke-width="0.7"/></svg>
<span class="a t" style="left:14.00px;top:60.90px;line-height:12px;transform:scaleX(0.949);">Температуры</span>
<svg class="a" style="left:13.00px;top:73.14px;" width="10" height="10" viewBox="0 0 10 10"><path d="M0.2 5 L5 2.2 L9.8 5 L5 7.8 Z" fill="#111"/><path d="M0.2 5.6 L5 8.4 L9.8 5.6" fill="none" stroke="#555" stroke-width="0.7"/></svg>
<span class="a t" style="left:24.20px;top:72.84px;line-height:12px;transform:scaleX(0.921);">Системная плата</span>
<span class="a t" style="left:129.80px;top:72.84px;line-height:12px;transform:scaleX(0.886);">33 °C  (91 °F)</span>
<svg class="a" style="left:13.00px;top:85.08px;" width="10" height="10" viewBox="0 0 10 10"><rect x="0.4" y="0.4" width="9.2" height="9.2" fill="#1e1e1e"/><rect x="1.8" y="1.6" width="6" height="6" fill="#8a8a8a"/><rect x="2.5" y="2.3" width="4.8" height="4.8" fill="#c9c9c9"/><rect x="3.2" y="3" width="3" height="2.6" fill="#dedede"/></svg>
<span class="a t" style="left:24.20px;top:84.78px;line-height:12px;transform:scaleX(0.939);">ЦП</span>
<span class="a t" style="left:129.80px;top:84.78px;line-height:12px;transform:scaleX(0.889);">67 °C  (153 °F)</span>
<svg class="a" style="left:13.00px;top:97.02px;" width="10" height="10" viewBox="0 0 10 10"><rect x="0.4" y="0.4" width="9.2" height="9.2" fill="#1e1e1e"/><rect x="1.8" y="1.6" width="6" height="6" fill="#8a8a8a"/><rect x="2.5" y="2.3" width="4.8" height="4.8" fill="#c9c9c9"/><rect x="3.2" y="3" width="3" height="2.6" fill="#dedede"/></svg>
<span class="a t" style="left:24.20px;top:96.72px;line-height:12px;transform:scaleX(0.877);">CPU Package</span>
<span class="a t" style="left:129.80px;top:96.72px;line-height:12px;transform:scaleX(0.889);">95 °C  (203 °F)</span>
<svg class="a" style="left:13.00px;top:108.96px;" width="10" height="10" viewBox="0 0 10 10"><rect x="0.4" y="0.4" width="9.2" height="9.2" fill="#1e1e1e"/><rect x="1.8" y="1.6" width="6" height="6" fill="#8a8a8a"/><rect x="2.5" y="2.3" width="4.8" height="4.8" fill="#c9c9c9"/><rect x="3.2" y="3" width="3" height="2.6" fill="#dedede"/></svg>
<span class="a t" style="left:24.20px;top:108.66px;line-height:12px;transform:scaleX(0.89);">CPU IA Cores</span>
<span class="a t" style="left:129.80px;top:108.66px;line-height:12px;transform:scaleX(0.889);">95 °C  (203 °F)</span>
<svg class="a" style="left:13.00px;top:120.90px;" width="10" height="10" viewBox="0 0 10 10"><rect x="0.3" y="0.5" width="7.2" height="5.6" fill="#1d3fb5" stroke="#0b1b66" stroke-width="0.6"/><rect x="1.4" y="1.4" width="3.2" height="2.2" fill="#8fb4ff"/><rect x="2.6" y="6.3" width="2.6" height="1.2" fill="#777"/><rect x="5.2" y="5.6" width="4.6" height="3.4" fill="#2d7a4a" stroke="#222" stroke-width="0.5"/><rect x="0.8" y="7.6" width="4" height="0.9" fill="#aaa"/></svg>
<span class="a t" style="left:24.20px;top:120.60px;line-height:12px;transform:scaleX(0.869);">CPU GT Cores</span>
<span class="a t" style="left:129.80px;top:120.60px;line-height:12px;transform:scaleX(0.889);">69 °C  (156 °F)</span>
<svg class="a" style="left:13.00px;top:132.84px;" width="10" height="10" viewBox="0 0 10 10"><rect x="0.4" y="0.4" width="9.2" height="9.2" fill="#1e1e1e"/><rect x="1.8" y="1.6" width="6" height="6" fill="#8a8a8a"/><rect x="2.5" y="2.3" width="4.8" height="4.8" fill="#c9c9c9"/><rect x="3.2" y="3" width="3" height="2.6" fill="#dedede"/></svg>
<span class="a t" style="left:24.20px;top:132.54px;line-height:12px;transform:scaleX(0.948);">ЦП 1 / Ядро 1</span>
<span class="a t" style="left:129.80px;top:132.54px;line-height:12px;transform:scaleX(0.889);">89 °C  (192 °F)</span>
<svg class="a" style="left:13.00px;top:144.78px;" width="10" height="10" viewBox="0 0 10 10"><rect x="0.4" y="0.4" width="9.2" height="9.2" fill="#1e1e1e"/><rect x="1.8" y="1.6" width="6" height="6" fill="#8a8a8a"/><rect x="2.5" y="2.3" width="4.8" height="4.8" fill="#c9c9c9"/><rect x="3.2" y="3" width="3" height="2.6" fill="#dedede"/></svg>
<span class="a t" style="left:24.20px;top:144.48px;line-height:12px;transform:scaleX(0.948);">ЦП 1 / Ядро 2</span>
<span class="a t" style="left:129.80px;top:144.48px;line-height:12px;transform:scaleX(0.889);">95 °C  (203 °F)</span>
<svg class="a" style="left:13.00px;top:156.72px;" width="10" height="10" viewBox="0 0 10 10"><rect x="0.4" y="0.4" width="9.2" height="9.2" fill="#1e1e1e"/><rect x="1.8" y="1.6" width="6" height="6" fill="#8a8a8a"/><rect x="2.5" y="2.3" width="4.8" height="4.8" fill="#c9c9c9"/><rect x="3.2" y="3" width="3" height="2.6" fill="#dedede"/></svg>
<span class="a t" style="left:24.20px;top:156.42px;line-height:12px;transform:scaleX(0.948);">ЦП 1 / Ядро 3</span>
<span class="a t" style="left:129.80px;top:156.42px;line-height:12px;transform:scaleX(0.889);">94 °C  (201 °F)</span>
<svg class="a" style="left:13.00px;top:168.66px;" width="10" height="10" viewBox="0 0 10 10"><rect x="0.4" y="0.4" width="9.2" height="9.2" fill="#1e1e1e"/><rect x="1.8" y="1.6" width="6" height="6" fill="#8a8a8a"/><rect x="2.5" y="2.3" width="4.8" height="4.8" fill="#c9c9c9"/><rect x="3.2" y="3" width="3" height="2.6" fill="#dedede"/></svg>
<span class="a t" style="left:24.20px;top:168.36px;line-height:12px;transform:scaleX(0.948);">ЦП 1 / Ядро 4</span>
<span class="a t" style="left:129.80px;top:168.36px;line-height:12px;transform:scaleX(0.889);">88 °C  (190 °F)</span>
<svg class="a" style="left:13.00px;top:180.60px;" width="10" height="10" viewBox="0 0 10 10"><rect x="0.3" y="0.5" width="7.2" height="5.6" fill="#1d3fb5" stroke="#0b1b66" stroke-width="0.6"/><rect x="1.4" y="1.4" width="3.2" height="2.2" fill="#8fb4ff"/><rect x="2.6" y="6.3" width="2.6" height="1.2" fill="#777"/><rect x="5.2" y="5.6" width="4.6" height="3.4" fill="#2d7a4a" stroke="#222" stroke-width="0.5"/><rect x="0.8" y="7.6" width="4" height="0.9" fill="#aaa"/></svg>
<span class="a t" style="left:24.20px;top:180.30px;line-height:12px;transform:scaleX(0.95);">Диод ГП</span>
<span class="a t" style="left:129.80px;top:180.30px;line-height:12px;transform:scaleX(0.889);">52 °C  (126 °F)</span>
<svg class="a" style="left:13.00px;top:192.54px;" width="10" height="10" viewBox="0 0 10 10"><rect x="0.3" y="0.5" width="7.2" height="5.6" fill="#1d3fb5" stroke="#0b1b66" stroke-width="0.6"/><rect x="1.4" y="1.4" width="3.2" height="2.2" fill="#8fb4ff"/><rect x="2.6" y="6.3" width="2.6" height="1.2" fill="#777"/><rect x="5.2" y="5.6" width="4.6" height="3.4" fill="#2d7a4a" stroke="#222" stroke-width="0.5"/><rect x="0.8" y="7.6" width="4" height="0.9" fill="#aaa"/></svg>
<span class="a t" style="left:24.20px;top:192.24px;line-height:12px;transform:scaleX(0.882);">GPU VRM</span>
<span class="a t" style="left:129.80px;top:192.24px;line-height:12px;transform:scaleX(0.889);">61 °C  (142 °F)</span>
<svg class="a" style="left:13.00px;top:204.48px;" width="10" height="10" viewBox="0 0 10 10"><path d="M0.6 4.4 L2 3 L8.4 3 L9.6 4.4 L9.6 8 L0.6 8 Z" fill="#e6e6e6" stroke="#8a8a8a" stroke-width="0.7"/><rect x="0.9" y="6.3" width="8.4" height="1.4" fill="#b5b5b5"/></svg>
<span class="a t" style="left:24.20px;top:204.18px;line-height:12px;transform:scaleX(0.872);">Corsair Force LS SSD</span>
<span class="a t" style="left:129.80px;top:204.18px;line-height:12px;transform:scaleX(0.886);">30 °C  (86 °F)</span>
<svg class="a" style="left:13.00px;top:216.42px;" width="10" height="10" viewBox="0 0 10 10"><path d="M0.6 4.4 L2 3 L8.4 3 L9.6 4.4 L9.6 8 L0.6 8 Z" fill="#e6e6e6" stroke="#8a8a8a" stroke-width="0.7"/><rect x="0.9" y="6.3" width="8.4" height="1.4" fill="#b5b5b5"/></svg>
<span class="a t" style="left:24.20px;top:216.12px;line-height:12px;transform:scaleX(0.899);">ST1000DM003-1ER162</span>
<span class="a t" style="left:129.80px;top:216.12px;line-height:12px;transform:scaleX(0.886);">34 °C  (93 °F)</span>
<svg class="a" style="left:13.00px;top:228.36px;" width="10" height="10" viewBox="0 0 10 10"><path d="M0.6 4.4 L2 3 L8.4 3 L9.6 4.4 L9.6 8 L0.6 8 Z" fill="#e6e6e6" stroke="#8a8a8a" stroke-width="0.7"/><rect x="0.9" y="6.3" width="8.4" height="1.4" fill="#b5b5b5"/></svg>
<span class="a t" style="left:24.20px;top:228.06px;line-height:12px;transform:scaleX(0.893);">WDC WD1003FZEX-00K3CA0</span>
<span class="a t" style="left:129.80px;top:228.06px;line-height:12px;transform:scaleX(0.886);">35 °C  (95 °F)</span>
<svg class="a" style="left:13.00px;top:240.30px;" width="10" height="10" viewBox="0 0 10 10"><path d="M0.6 4.4 L2 3 L8.4 3 L9.6 4.4 L9.6 8 L0.6 8 Z" fill="#e6e6e6" stroke="#8a8a8a" stroke-width="0.7"/><rect x="0.9" y="6.3" width="8.4" height="1.4" fill="#b5b5b5"/></svg>
<span class="a t" style="left:24.20px;top:240.00px;line-height:12px;transform:scaleX(0.909);">WDC WD3200AAKS-00VYA0</span>
<span class="a t" style="left:129.80px;top:240.00px;line-height:12px;transform:scaleX(0.889);">39 °C  (102 °F)</span>
<svg class="a" style="left:2.80px;top:264.18px;" width="10" height="10" viewBox="0 0 10 10"><circle cx="5" cy="5" r="4.4" fill="#151515"/><circle cx="5" cy="5" r="3" fill="none" stroke="#e8e8e8" stroke-width="0.9" stroke-dasharray="2.2 1.2"/><circle cx="5" cy="5" r="1" fill="#f0f0f0"/></svg>
<span class="a t" style="left:14.00px;top:263.88px;line-height:12px;transform:scaleX(0.945);">Вентиляторы</span>
<svg class="a" style="left:13.00px;top:276.12px;" width="10" height="10" viewBox="0 0 10 10"><rect x="0.4" y="0.4" width="9.2" height="9.2" fill="#1e1e1e"/><rect x="1.8" y="1.6" width="6" height="6" fill="#8a8a8a"/><rect x="2.5" y="2.3" width="4.8" height="4.8" fill="#c9c9c9"/><rect x="3.2" y="3" width="3" height="2.6" fill="#dedede"/></svg>
<span class="a t" style="left:24.20px;top:275.82px;line-height:12px;transform:scaleX(0.939);">ЦП</span>
<span class="a t" style="left:129.80px;top:275.82px;line-height:12px;transform:scaleX(0.903);">1241 RPM</span>
<svg class="a" style="left:13.00px;top:288.06px;" width="10" height="10" viewBox="0 0 10 10"><path d="M1 2.4 L2.6 0.8 L9 0.8 L9 7.6 L7.4 9.2 L1 9.2 Z" fill="#f4f4f4" stroke="#999" stroke-width="0.7"/><path d="M1 2.4 L7.4 2.4 L9 0.8 M7.4 2.4 L7.4 9.2" fill="none" stroke="#aaa" stroke-width="0.6"/></svg>
<span class="a t" style="left:24.20px;top:287.76px;line-height:12px;transform:scaleX(0.941);">Шасси 1</span>
<span class="a t" style="left:129.80px;top:287.76px;line-height:12px;transform:scaleX(0.918);">1511 RPM</span>
<svg class="a" style="left:13.00px;top:300.00px;" width="10" height="10" viewBox="0 0 10 10"><path d="M1 2.4 L2.6 0.8 L9 0.8 L9 7.6 L7.4 9.2 L1 9.2 Z" fill="#f4f4f4" stroke="#999" stroke-width="0.7"/><path d="M1 2.4 L7.4 2.4 L9 0.8 M7.4 2.4 L7.4 9.2" fill="none" stroke="#aaa" stroke-width="0.6"/></svg>
<span class="a t" style="left:24.20px;top:299.70px;line-height:12px;transform:scaleX(0.941);">Шасси 2</span>
<span class="a t" style="left:129.80px;top:299.70px;line-height:12px;transform:scaleX(0.901);">795 RPM</span>
<svg class="a" style="left:13.00px;top:311.94px;" width="10" height="10" viewBox="0 0 10 10"><rect x="0.3" y="0.5" width="7.2" height="5.6" fill="#1d3fb5" stroke="#0b1b66" stroke-width="0.6"/><rect x="1.4" y="1.4" width="3.2" height="2.2" fill="#8fb4ff"/><rect x="2.6" y="6.3" width="2.6" height="1.2" fill="#777"/><rect x="5.2" y="5.6" width="4.6" height="3.4" fill="#2d7a4a" stroke="#222" stroke-width="0.5"/><rect x="0.8" y="7.6" width="4" height="0.9" fill="#aaa"/></svg>
<span class="a t" style="left:24.20px;top:311.64px;line-height:12px;transform:scaleX(0.952);">Графический процессор</span>
<span class="a t" style="left:129.80px;top:311.64px;line-height:12px;transform:scaleX(0.901);">14%</span>
<svg class="a" style="left:2.80px;top:335.82px;" width="10" height="10" viewBox="0 0 10 10"><path d="M5 0.5 L9.7 9.2 L0.3 9.2 Z" fill="#f6c21a" stroke="#b07a00" stroke-width="0.7" stroke-linejoin="round"/><path d="M5.4 3 L4.2 5.8 L5.3 5.8 L4.6 8.2" fill="none" stroke="#3a2a00" stroke-width="0.9"/></svg>
<span class="a t" style="left:14.00px;top:335.52px;line-height:12px;transform:scaleX(0.97);">Напряжения</span>
<svg class="a" style="left:13.00px;top:347.76px;" width="10" height="10" viewBox="0 0 10 10"><rect x="0.4" y="0.4" width="9.2" height="9.2" fill="#1e1e1e"/><rect x="1.8" y="1.6" width="6" height="6" fill="#8a8a8a"/><rect x="2.5" y="2.3" width="4.8" height="4.8" fill="#c9c9c9"/><rect x="3.2" y="3" width="3" height="2.6" fill="#dedede"/></svg>
<span class="a t" style="left:24.20px;top:347.46px;line-height:12px;transform:scaleX(0.931);">Ядро ЦП</span>
<span class="a t" style="left:129.80px;top:347.46px;line-height:12px;transform:scaleX(0.902);">1.268 V</span>
<svg class="a" style="left:13.00px;top:359.70px;" width="10" height="10" viewBox="0 0 10 10"><rect x="0.4" y="0.4" width="9.2" height="9.2" fill="#1e1e1e"/><rect x="1.8" y="1.6" width="6" height="6" fill="#8a8a8a"/><rect x="2.5" y="2.3" width="4.8" height="4.8" fill="#c9c9c9"/><rect x="3.2" y="3" width="3" height="2.6" fill="#dedede"/></svg>
<span class="a t" style="left:24.20px;top:359.40px;line-height:12px;transform:scaleX(0.879);">CPU VRM</span>
<span class="a t" style="left:129.80px;top:359.40px;line-height:12px;transform:scaleX(0.902);">1.760 V</span>
<svg class="a" style="left:13.00px;top:371.64px;" width="10" height="10" viewBox="0 0 10 10"><path d="M5 0.5 L9.7 9.2 L0.3 9.2 Z" fill="#f6c21a" stroke="#b07a00" stroke-width="0.7" stroke-linejoin="round"/><path d="M5.4 3 L4.2 5.8 L5.3 5.8 L4.6 8.2" fill="none" stroke="#3a2a00" stroke-width="0.9"/></svg>
<span class="a t" style="left:24.20px;top:371.34px;line-height:12px;transform:scaleX(0.937);">+3.3 V</span>
<span class="a t" style="left:129.80px;top:371.34px;line-height:12px;transform:scaleX(0.902);">3.376 V</span>
<svg class="a" style="left:13.00px;top:383.58px;" width="10" height="10" viewBox="0 0 10 10"><path d="M5 0.5 L9.7 9.2 L0.3 9.2 Z" fill="#f6c21a" stroke="#b07a00" stroke-width="0.7" stroke-linejoin="round"/><path d="M5.4 3 L4.2 5.8 L5.3 5.8 L4.6 8.2" fill="none" stroke="#3a2a00" stroke-width="0.9"/></svg>
<span class="a t" style="left:24.20px;top:383.28px;line-height:12px;transform:scaleX(0.967);">+5 V</span>
<span class="a t" style="left:129.80px;top:383.28px;line-height:12px;transform:scaleX(0.902);">5.080 V</span>
<svg class="a" style="left:13.00px;top:395.52px;" width="10" height="10" viewBox="0 0 10 10"><path d="M5 0.5 L9.7 9.2 L0.3 9.2 Z" fill="#f6c21a" stroke="#b07a00" stroke-width="0.7" stroke-linejoin="round"/><path d="M5.4 3 L4.2 5.8 L5.3 5.8 L4.6 8.2" fill="none" stroke="#3a2a00" stroke-width="0.9"/></svg>
<span class="a t" style="left:24.20px;top:395.22px;line-height:12px;transform:scaleX(0.958);">+12 V</span>
<span class="a t" style="left:129.80px;top:395.22px;line-height:12px;transform:scaleX(0.905);">12.096 V</span>
<svg class="a" style="left:13.00px;top:407.46px;" width="10" height="10" viewBox="0 0 10 10"><path d="M5 0.5 L9.7 9.2 L0.3 9.2 Z" fill="#f6c21a" stroke="#b07a00" stroke-width="0.7" stroke-linejoin="round"/><path d="M5.4 3 L4.2 5.8 L5.3 5.8 L4.6 8.2" fill="none" stroke="#3a2a00" stroke-width="0.9"/></svg>
<span class="a t" style="left:24.20px;top:407.16px;line-height:12px;transform:scaleX(0.951);">+3.3 V резерв</span>
<span class="a t" style="left:129.80px;top:407.16px;line-height:12px;transform:scaleX(0.902);">3.296 V</span>
<svg class="a" style="left:13.00px;top:419.40px;" width="10" height="10" viewBox="0 0 10 10"><circle cx="5.2" cy="5.4" r="4" fill="#3d9a3d" stroke="#1d5a1d" stroke-width="0.6"/><path d="M2.2 4 q3 -2.4 6 0" fill="none" stroke="#bfe8bf" stroke-width="1"/><path d="M0.6 3 L3.6 0.8 L4.4 3.4 Z" fill="#555"/></svg>
<span class="a t" style="left:24.20px;top:419.10px;line-height:12px;transform:scaleX(0.903);">Батарея VBAT</span>
<span class="a t" style="left:129.80px;top:419.10px;line-height:12px;transform:scaleX(0.902);">3.248 V</span>
<svg class="a" style="left:13.00px;top:431.34px;" width="10" height="10" viewBox="0 0 10 10"><rect x="0.4" y="0.4" width="9.2" height="9.2" fill="#1e1e1e"/><rect x="1.8" y="1.6" width="6" height="6" fill="#8a8a8a"/><rect x="2.5" y="2.3" width="4.8" height="4.8" fill="#c9c9c9"/><rect x="3.2" y="3" width="3" height="2.6" fill="#dedede"/></svg>
<span class="a t" style="left:24.20px;top:431.04px;line-height:12px;transform:scaleX(0.839);">VCCSA</span>
<span class="a t" style="left:129.80px;top:431.04px;line-height:12px;transform:scaleX(0.902);">0.152 V</span>
<svg class="a" style="left:13.00px;top:443.28px;" width="10" height="10" viewBox="0 0 10 10"><path d="M5 0.5 L9.7 9.2 L0.3 9.2 Z" fill="#f6c21a" stroke="#b07a00" stroke-width="0.7" stroke-linejoin="round"/><path d="M5.4 3 L4.2 5.8 L5.3 5.8 L4.6 8.2" fill="none" stroke="#3a2a00" stroke-width="0.9"/></svg>
<span class="a t" style="left:24.20px;top:442.98px;line-height:12px;transform:scaleX(0.842);">VTT</span>
<span class="a t" style="left:129.80px;top:442.98px;line-height:12px;transform:scaleX(0.902);">1.008 V</span>
<svg class="a" style="left:13.00px;top:455.22px;" width="10" height="10" viewBox="0 0 10 10"><rect x="0.3" y="0.5" width="7.2" height="5.6" fill="#1d3fb5" stroke="#0b1b66" stroke-width="0.6"/><rect x="1.4" y="1.4" width="3.2" height="2.2" fill="#8fb4ff"/><rect x="2.6" y="6.3" width="2.6" height="1.2" fill="#777"/><rect x="5.2" y="5.6" width="4.6" height="3.4" fill="#2d7a4a" stroke="#222" stroke-width="0.5"/><rect x="0.8" y="7.6" width="4" height="0.9" fill="#aaa"/></svg>
<span class="a t" style="left:24.20px;top:454.92px;line-height:12px;transform:scaleX(0.866);">iGPU</span>
<span class="a t" style="left:129.80px;top:454.92px;line-height:12px;transform:scaleX(0.902);">0.176 V</span>
<svg class="a" style="left:13.00px;top:467.16px;" width="10" height="10" viewBox="0 0 10 10"><rect x="0.3" y="0.5" width="7.2" height="5.6" fill="#1d3fb5" stroke="#0b1b66" stroke-width="0.6"/><rect x="1.4" y="1.4" width="3.2" height="2.2" fill="#8fb4ff"/><rect x="2.6" y="6.3" width="2.6" height="1.2" fill="#777"/><rect x="5.2" y="5.6" width="4.6" height="3.4" fill="#2d7a4a" stroke="#222" stroke-width="0.5"/><rect x="0.8" y="7.6" width="4" height="0.9" fill="#aaa"/></svg>
<span class="a t" style="left:24.20px;top:466.86px;line-height:12px;transform:scaleX(0.915);">Ядро ГП</span>
<span class="a t" style="left:129.80px;top:466.86px;line-height:12px;transform:scaleX(0.902);">1.212 V</span>
</div>
<div class="a" style="left:414.40px;top:53.30px;width:8.40px;height:488.60px;background:#f0f0f0;"></div>
<div class="a" style="left:414.80px;top:64.60px;width:7.80px;height:342.40px;background:#cdcdcd;"></div>
<svg class="a" style="left:415.70px;top:57.40px;" width="6" height="4" viewBox="0 0 6 4"><path d="M0.5 3.4 L3 0.8 L5.5 3.4" fill="none" stroke="#303030" stroke-width="1.25"/></svg>
<svg class="a" style="left:415.70px;top:534.00px;" width="6" height="4" viewBox="0 0 6 4"><path d="M0.5 0.6 L3 3.2 L5.5 0.6" fill="none" stroke="#303030" stroke-width="1.25"/></svg>
<div class="a" style="left:126.30px;top:541.80px;width:296.40px;height:10.40px;background:#f0f0f0;"></div>
<div class="a" style="left:137.00px;top:542.40px;width:211.00px;height:9.20px;background:#cdcdcd;"></div>
<svg class="a" style="left:129.60px;top:544.00px;" width="4" height="6" viewBox="0 0 4 6"><path d="M3.4 0.5 L0.8 3 L3.4 5.5" fill="none" stroke="#303030" stroke-width="1.25"/></svg>
<svg class="a" style="left:406.00px;top:544.00px;" width="4" height="6" viewBox="0 0 4 6"><path d="M0.6 0.5 L3.2 3 L0.6 5.5" fill="none" stroke="#303030" stroke-width="1.25"/></svg>
<div class="a" style="left:3.20px;top:553.20px;width:421.70px;height:13.40px;background:#f0f0f0;"></div>
<div class="a" style="left:222.00px;top:554.60px;width:0.80px;height:11.00px;background:#d0d0d0;"></div>
<div class="a" style="left:346.60px;top:554.60px;width:0.80px;height:11.00px;background:#d0d0d0;"></div>
<svg class="a" style="left:4.60px;top:555.40px;" width="10" height="10" viewBox="0 0 10 10"><circle cx="5" cy="5" r="4.35" fill="#fff" stroke="#7a7a7a" stroke-width="0.6"/><circle cx="5" cy="5" r="3.6" fill="none" stroke="#e0708a" stroke-width="0.9"/><path d="M3.3 6.8 L3.7 3.3 L6.5 6.5" fill="none" stroke="#c02044" stroke-width="0.95" stroke-linejoin="round"/></svg>
<span class="a t" style="left:16.00px;top:554.80px;line-height:12px;transform:scaleX(0.979);">Датчики</span>
<svg class="a" style="left:226.00px;top:555.60px;" width="10" height="10" viewBox="0 0 10 10"><rect x="0.3" y="0.5" width="7.2" height="5.6" fill="#1d3fb5" stroke="#0b1b66" stroke-width="0.6"/><rect x="1.4" y="1.4" width="3.2" height="2.2" fill="#8fb4ff"/><rect x="2.6" y="6.3" width="2.6" height="1.2" fill="#777"/><rect x="5.2" y="5.6" width="4.6" height="3.4" fill="#2d7a4a" stroke="#222" stroke-width="0.5"/><rect x="0.8" y="7.6" width="4" height="0.9" fill="#aaa"/></svg>
<span class="a t" style="left:238.00px;top:554.80px;line-height:12px;transform:scaleX(0.974);">Локальный</span>
<span class="a t" style="left:351.00px;top:554.80px;line-height:12px;transform:scaleX(0.948);">Copyright (c) 1995-</span>
<div class="a" style="left:418.60px;top:563.60px;width:1.00px;height:1.00px;background:#aaa;"></div>
<div class="a" style="left:420.60px;top:563.60px;width:1.00px;height:1.00px;background:#aaa;"></div>
<div class="a" style="left:422.60px;top:563.60px;width:1.00px;height:1.00px;background:#aaa;"></div>
<div class="a" style="left:420.60px;top:561.60px;width:1.00px;height:1.00px;background:#aaa;"></div>
<div class="a" style="left:422.60px;top:561.60px;width:1.00px;height:1.00px;background:#aaa;"></div>
<div class="a" style="left:422.60px;top:559.60px;width:1.00px;height:1.00px;background:#aaa;"></div>
<div class="a" style="left:427.50px;top:0.00px;width:412.90px;height:568.60px;background:#f0f0f0;"></div>
<div class="a" style="left:427.50px;top:0.00px;width:412.90px;height:19.30px;background:#ffffff;"></div>
<svg class="a" style="left:433.00px;top:3.60px;" width="10" height="11" viewBox="0 0 10 11"><path d="M3.2 0.4 Q6.4 2 6.2 4 Q8.6 4.4 9.2 7 Q9.4 10.6 5 10.8 Q0.6 10.6 0.8 7 Q1 4.4 3.4 3.4 Q3.8 1.8 3.2 0.4 Z" fill="#f0861c"/><path d="M3.6 1.2 Q5.4 2.6 5 4.6 Q3.4 4 3 5.6 Q2.2 3.4 3.6 1.2 Z" fill="#f8d040"/><ellipse cx="5.4" cy="8" rx="2.6" ry="2" fill="#d8481c"/></svg>
<span class="a tt" style="left:446.00px;top:3.40px;line-height:12px;transform:scaleX(0.925);">System Stability Test - AIDA64</span>
<div class="a" style="left:765.00px;top:8.80px;width:6.00px;height:0.90px;background:#a6a6a6;"></div>
<div class="a" style="left:793.40px;top:5.40px;width:6.60px;height:6.60px;border:0.9px solid #a6a6a6;"></div>
<svg class="a" style="left:822.00px;top:5.40px;" width="7" height="7" viewBox="0 0 7 7"><path d="M0.3 0.3 L6.7 6.7 M6.7 0.3 L0.3 6.7" stroke="#9c9c9c" stroke-width="0.9"/></svg>
<div class="a" style="left:431.40px;top:24.40px;width:402.40px;height:520.80px;background:#fdfdfd;border:0.8px solid #e2e2e2;"></div>
<svg class="a" style="left:438.80px;top:32.80px;" width="10" height="10" viewBox="0 0 10 10"><rect x="0.4" y="0.4" width="9.2" height="9.2" fill="#1e1e1e"/><rect x="1.8" y="1.6" width="6" height="6" fill="#8a8a8a"/><rect x="2.5" y="2.3" width="4.8" height="4.8" fill="#c9c9c9"/><rect x="3.2" y="3" width="3" height="2.6" fill="#dedede"/></svg>
<div class="a" style="left:454.00px;top:34.00px;width:8.80px;height:8.80px;background:#fff;border:0.9px solid #3a3a3a;"></div>
<svg class="a" style="left:455.20px;top:35.20px;" width="6.6" height="6.4" viewBox="0 0 6.6 6.4"><path d="M0.7 3.2 L2.5 5.1 L6 0.8" fill="none" stroke="#1e1e1e" stroke-width="1.15"/></svg>
<span class="a t" style="left:464.20px;top:33.00px;line-height:12px;transform:scaleX(0.861);">Stress CPU</span>
<svg class="a" style="left:438.80px;top:45.48px;" width="10" height="10" viewBox="0 0 10 10"><rect x="0.5" y="0.5" width="9" height="9" fill="#2a2a2a"/><rect x="2" y="1.8" width="6" height="6" fill="#d0d0d0"/><path d="M3.2 3 L6.8 6.6 M6.8 3 L3.2 6.6" stroke="#444" stroke-width="0.9"/></svg>
<div class="a" style="left:454.00px;top:46.68px;width:8.80px;height:8.80px;background:#fff;border:0.9px solid #3a3a3a;"></div>
<svg class="a" style="left:455.20px;top:47.88px;" width="6.6" height="6.4" viewBox="0 0 6.6 6.4"><path d="M0.7 3.2 L2.5 5.1 L6 0.8" fill="none" stroke="#1e1e1e" stroke-width="1.15"/></svg>
<span class="a t" style="left:464.20px;top:45.68px;line-height:12px;transform:scaleX(0.856);">Stress FPU</span>
<svg class="a" style="left:438.80px;top:58.16px;" width="10" height="10" viewBox="0 0 10 10"><rect x="1.8" y="0.3" width="6.4" height="9.4" fill="#333"/><rect x="3.6" y="1.2" width="2.8" height="7.6" fill="#8a8a8a"/><rect x="1" y="1" width="1" height="8" fill="#777"/><rect x="8" y="1" width="1" height="8" fill="#777"/></svg>
<div class="a" style="left:454.00px;top:59.36px;width:8.80px;height:8.80px;background:#fff;border:0.9px solid #3a3a3a;"></div>
<svg class="a" style="left:455.20px;top:60.56px;" width="6.6" height="6.4" viewBox="0 0 6.6 6.4"><path d="M0.7 3.2 L2.5 5.1 L6 0.8" fill="none" stroke="#1e1e1e" stroke-width="1.15"/></svg>
<span class="a t" style="left:464.20px;top:58.36px;line-height:12px;transform:scaleX(0.886);">Stress cache</span>
<svg class="a" style="left:438.80px;top:70.84px;" width="10" height="10" viewBox="0 0 10 10"><rect x="0" y="2.6" width="10" height="4.6" fill="#1e5a2c"/><rect x="0.8" y="3.4" width="8.4" height="1.6" fill="#d9cf6a"/><rect x="0.5" y="7.2" width="9" height="0.9" fill="#222"/></svg>
<div class="a" style="left:454.00px;top:72.04px;width:8.80px;height:8.80px;background:#fff;border:0.9px solid #3a3a3a;"></div>
<svg class="a" style="left:455.20px;top:73.24px;" width="6.6" height="6.4" viewBox="0 0 6.6 6.4"><path d="M0.7 3.2 L2.5 5.1 L6 0.8" fill="none" stroke="#1e1e1e" stroke-width="1.15"/></svg>
<span class="a t" style="left:464.20px;top:71.04px;line-height:12px;transform:scaleX(0.922);">Stress system memory</span>
<svg class="a" style="left:438.80px;top:83.52px;" width="10" height="10" viewBox="0 0 10 10"><path d="M0.6 4.4 L2 3 L8.4 3 L9.6 4.4 L9.6 8 L0.6 8 Z" fill="#e6e6e6" stroke="#8a8a8a" stroke-width="0.7"/><rect x="0.9" y="6.3" width="8.4" height="1.4" fill="#b5b5b5"/></svg>
<div class="a" style="left:454.00px;top:84.72px;width:8.80px;height:8.80px;background:#fff;border:0.9px solid #3a3a3a;"></div>
<svg class="a" style="left:455.20px;top:85.92px;" width="6.6" height="6.4" viewBox="0 0 6.6 6.4"><path d="M0.7 3.2 L2.5 5.1 L6 0.8" fill="none" stroke="#1e1e1e" stroke-width="1.15"/></svg>
<span class="a t" style="left:464.20px;top:83.72px;line-height:12px;transform:scaleX(0.906);">Stress local disks</span>
<svg class="a" style="left:438.80px;top:96.20px;" width="10" height="10" viewBox="0 0 10 10"><rect x="0.3" y="0.5" width="7.2" height="5.6" fill="#1d3fb5" stroke="#0b1b66" stroke-width="0.6"/><rect x="1.4" y="1.4" width="3.2" height="2.2" fill="#8fb4ff"/><rect x="2.6" y="6.3" width="2.6" height="1.2" fill="#777"/><rect x="5.2" y="5.6" width="4.6" height="3.4" fill="#2d7a4a" stroke="#222" stroke-width="0.5"/><rect x="0.8" y="7.6" width="4" height="0.9" fill="#aaa"/></svg>
<div class="a" style="left:454.00px;top:97.40px;width:8.80px;height:8.80px;background:#fff;border:0.9px solid #3a3a3a;"></div>
<svg class="a" style="left:455.20px;top:98.60px;" width="6.6" height="6.4" viewBox="0 0 6.6 6.4"><path d="M0.7 3.2 L2.5 5.1 L6 0.8" fill="none" stroke="#1e1e1e" stroke-width="1.15"/></svg>
<span class="a t" style="left:464.20px;top:96.40px;line-height:12px;transform:scaleX(0.86);">Stress GPU(s)</span>
<div class="a" style="left:542.40px;top:33.30px;width:287.60px;height:75.00px;background:#ffffff;border:0.9px solid #828282;"></div>
<span class="a t" style="left:547.20px;top:36.00px;line-height:12px;transform:scaleX(0.963);">Date &amp; Time</span>
<span class="a t" style="left:641.40px;top:36.00px;line-height:12px;transform:scaleX(0.908);">Status</span>
<div class="a" style="left:637.40px;top:34.40px;width:0.80px;height:72.80px;background:#ececec;"></div>
<div class="a" style="left:817.60px;top:34.40px;width:0.80px;height:72.80px;background:#ececec;"></div>
<div class="a" style="left:543.40px;top:61.00px;width:285.60px;height:0.80px;background:#f2f2f2;"></div>
<div class="a" style="left:543.40px;top:73.60px;width:285.60px;height:0.80px;background:#f2f2f2;"></div>
<div class="a" style="left:543.40px;top:86.00px;width:285.60px;height:0.80px;background:#f2f2f2;"></div>
<div class="a" style="left:543.40px;top:98.60px;width:285.60px;height:0.80px;background:#f2f2f2;"></div>
<div class="a" style="left:443.00px;top:112.60px;width:52.40px;height:15.20px;background:#ffffff;border:0.8px solid #d4d4d4;border-bottom:none;"></div>
<span class="a t" style="left:447.00px;top:113.60px;line-height:12px;transform:scaleX(0.945);">Temperatures</span>
<div class="a" style="left:495.40px;top:114.80px;width:50.00px;height:12.60px;background:#f0f0f0;border:0.8px solid #d4d4d4;border-left:none;"></div>
<span class="a t" style="left:499.00px;top:114.60px;line-height:12px;transform:scaleX(0.918);">Cooling Fans</span>
<div class="a" style="left:545.40px;top:114.80px;width:35.20px;height:12.60px;background:#f0f0f0;border:0.8px solid #d4d4d4;border-left:none;"></div>
<span class="a t" style="left:549.00px;top:114.60px;line-height:12px;transform:scaleX(0.951);">Voltages</span>
<div class="a" style="left:580.60px;top:114.80px;width:32.00px;height:12.60px;background:#f0f0f0;border:0.8px solid #d4d4d4;border-left:none;"></div>
<span class="a t" style="left:584.20px;top:114.60px;line-height:12px;transform:scaleX(0.902);">Powers</span>
<div class="a" style="left:612.60px;top:114.80px;width:29.60px;height:12.60px;background:#f0f0f0;border:0.8px solid #d4d4d4;border-left:none;"></div>
<span class="a t" style="left:616.20px;top:114.60px;line-height:12px;transform:scaleX(0.897);">Clocks</span>
<div class="a" style="left:642.20px;top:114.80px;width:36.00px;height:12.60px;background:#f0f0f0;border:0.8px solid #d4d4d4;border-left:none;"></div>
<span class="a t" style="left:645.80px;top:114.60px;line-height:12px;transform:scaleX(0.916);">Statistics</span>
<div class="a" style="left:678.20px;top:127.00px;width:155.00px;height:0.80px;background:#e4e4e4;"></div>
<div class="a" style="left:445.00px;top:133.00px;width:12.40px;height:179.00px;background:#e3e3e3;"></div>
<div class="a" style="left:443.40px;top:133.60px;width:14.60px;height:5.80px;background:#1a78d2;"></div>
<svg class="a" style="left:457.80px;top:127.50px;overflow:hidden;" width="367.5" height="191.2" viewBox="0 0 367.5 191.2"><rect x="0" y="0" width="367.5" height="191.2" fill="#000"/><path d="M32.70 21.80H336.40 M32.70 36.91H336.40 M32.70 52.02H336.40 M32.70 67.13H336.40 M32.70 82.24H336.40 M32.70 97.35H336.40 M32.70 112.46H336.40 M32.70 127.57H336.40 M32.70 142.68H336.40 M32.70 157.79H336.40 M32.70 172.90H336.40" stroke="#2b6b2b" stroke-width="0.8" fill="none"/><path d="M336.30 18.30V172.90 M330.01 18.30V172.90 M323.72 18.30V172.90 M317.43 18.30V172.90 M311.14 18.30V172.90 M304.85 18.30V172.90 M298.56 18.30V172.90 M292.27 18.30V172.90 M285.98 18.30V172.90 M279.69 18.30V172.90 M273.40 18.30V172.90 M267.11 18.30V172.90 M260.82 18.30V172.90 M254.53 18.30V172.90 M248.24 18.30V172.90 M241.95 18.30V172.90 M235.66 18.30V172.90 M229.37 18.30V172.90 M223.08 18.30V172.90 M216.79 18.30V172.90 M210.50 18.30V172.90 M204.21 18.30V172.90 M197.92 18.30V172.90 M191.63 18.30V172.90 M185.34 18.30V172.90 M179.05 18.30V172.90 M172.76 18.30V172.90 M166.47 18.30V172.90 M160.18 18.30V172.90 M153.89 18.30V172.90 M147.60 18.30V172.90 M141.31 18.30V172.90 M135.02 18.30V172.90 M128.73 18.30V172.90 M122.44 18.30V172.90 M116.15 18.30V172.90 M109.86 18.30V172.90 M103.57 18.30V172.90 M97.28 18.30V172.90 M90.99 18.30V172.90 M84.70 18.30V172.90 M78.41 18.30V172.90 M72.12 18.30V172.90 M65.83 18.30V172.90 M59.54 18.30V172.90 M53.25 18.30V172.90 M46.96 18.30V172.90 M40.67 18.30V172.90 M34.38 18.30V172.90 M32.70 18.30V172.90" stroke="#4c964c" stroke-width="0.8" fill="none"/><rect x="32.7" y="119.3" width="303.7" height="3.9" fill="#c2ac72"/><path d="M32.7 121.4 H336.4" stroke="#e0d48a" stroke-width="0.8"/><path d="M107.2 119.2 Q115.2 116.9 124.2 119.2" stroke="#d8cc80" stroke-width="0.8" fill="none"/><path d="M32.7 127.0 H336.4" stroke="#3a9ad6" stroke-width="1"/><path d="M32.7 93.8 L34.3 94.5 L35.9 94.4 L37.5 94.1 L39.1 93.7 L40.7 92.9 L42.3 92.8 L43.9 92.9 L45.5 93.3 L47.1 92.1 L48.7 90.6 L50.3 90.7 L51.9 92.3 L53.5 92.4 L55.1 91.8 L56.7 92.8 L58.3 93.6 L59.9 94.1 L61.5 94.4 L63.1 94.1 L64.7 93.7 L66.3 93.8 L67.9 93.4 L69.5 93.5 L71.1 93.8 L72.7 93.9 L74.3 94.3 L75.9 94.2 L77.5 94.2 L79.1 93.6 L80.7 93.2 L82.3 93.0 L83.9 93.3 L85.5 93.5 L87.1 93.6 L88.7 94.4 L90.3 94.6 L91.9 94.5 L93.5 94.4 L95.1 94.1 L96.7 94.2 L98.3 94.7 L99.9 94.9 L101.5 95.7 L103.1 95.5 L104.7 95.5 L106.3 94.8 L107.9 94.9 L109.5 95.0 L111.1 94.3 L112.7 94.3 L114.3 94.8 L115.9 94.5 L117.5 94.6 L119.1 93.9 L120.7 93.2 L122.3 93.7 L123.9 94.5 L125.5 94.7 L127.1 94.9 L128.7 95.2 L130.3 95.8 L131.9 95.8 L133.5 95.1 L135.1 95.0 L136.7 95.0 L138.3 95.2 L139.9 94.2 L141.5 95.2 L143.1 95.4 L144.7 94.8 L146.3 94.0 L147.9 94.2 L149.5 93.8 L151.1 94.4 L152.7 94.4 L154.3 94.7 L155.9 94.5 L157.5 94.4 L159.1 94.9 L160.7 95.2 L162.3 95.2 L163.9 96.1 L165.5 96.1 L167.1 96.4 L168.7 96.8 L170.3 96.5 L171.9 95.5 L173.5 95.7 L175.1 95.1 L176.7 95.0 L178.3 95.6 L179.9 95.4 L181.5 95.0 L183.1 94.4 L184.7 93.8 L186.3 94.0 L187.9 93.9 L189.5 94.6 L191.1 95.1 L192.7 95.6 L194.3 96.5 L195.9 96.3 L197.5 96.2 L199.1 96.4 L200.7 95.9 L202.3 95.9 L203.9 96.8 L205.5 97.2 L207.1 96.8 L208.7 96.2 L210.3 96.1 L211.9 95.9 L213.5 95.1 L215.1 95.5 L216.7 95.9 L218.3 96.0 L219.9 96.0 L221.5 95.6 L223.1 95.2 L224.7 95.8 L226.3 95.6 L227.9 96.2 L229.5 96.5 L231.1 97.5 L232.7 97.8 L234.3 97.5 L235.9 96.9 L237.5 96.9 L239.1 96.0 L240.7 95.6 L242.3 95.9 L243.9 96.3 L245.5 96.3 L247.1 95.7 L248.7 95.7 L250.3 94.7 L251.9 93.9 L253.5 93.8 L255.1 94.2 L256.7 94.3 L258.3 94.7 L259.9 95.2 L261.5 95.5 L263.1 95.0 L264.7 95.0 L266.3 95.5 L267.9 96.0 L269.5 96.2 L271.1 96.4 L272.7 96.3 L274.3 95.5 L275.9 94.6 L277.5 93.8 L279.1 94.1 L280.7 94.1 L282.3 94.5 L283.9 94.0 L285.5 94.4 L287.1 94.4 L288.7 94.5 L290.3 94.0 L291.9 94.4 L293.5 94.0 L295.1 94.5 L296.7 95.3 L298.3 96.1 L299.9 96.2 L301.5 96.0 L303.1 95.6 L304.7 95.3 L306.3 94.5 L307.9 94.4 L309.5 94.7 L311.1 94.8 L312.7 94.1 L314.3 93.8 L315.9 93.4 L317.5 92.7 L319.1 92.3 L320.7 92.1 L322.3 92.5 L323.9 93.0 L325.5 92.9 L327.1 93.3 L328.7 93.6 L330.3 92.9 L331.9 91.2 L333.5 91.9 L335.1 93.5" stroke="#d64a40" stroke-width="0.9" fill="none"/><path d="M32.7 81.1 L34.5 81.4 L36.3 81.1 L38.1 80.6 L39.9 80.1 L41.7 79.8 L43.5 79.9 L45.3 80.1 L47.1 80.2 L48.9 80.1 L50.7 79.8 L52.5 79.3 L54.3 79.2 L56.1 79.3 L57.9 80.1 L59.7 80.5 L61.5 81.1 L63.3 81.0 L65.1 80.9 L66.9 80.7 L68.7 80.7 L70.5 81.1 L72.3 81.1 L74.1 81.1 L75.9 81.1 L77.7 80.6 L79.5 79.9 L81.3 79.9 L83.1 80.1 L84.9 80.3 L86.7 80.6 L88.5 80.7 L90.3 80.7 L92.1 80.7 L93.9 80.7 L95.7 81.2 L97.5 81.7 L99.3 82.2 L101.1 82.6 L102.9 82.4 L104.7 82.0 L106.5 81.6 L108.3 81.4 L110.1 81.4 L111.9 81.4 L113.7 81.6 L115.5 81.6 L117.3 81.3 L119.1 80.9 L120.9 80.8 L122.7 81.0 L124.5 81.7 L126.3 82.3 L128.1 82.4 L129.9 82.4 L131.7 82.2 L133.5 82.2 L135.3 82.5 L137.1 82.7 L138.9 82.8 L140.7 82.9 L142.5 82.4 L144.3 81.9 L146.1 81.2 L147.9 81.0 L149.7 81.2 L151.5 81.7 L153.3 81.8 L155.1 81.9 L156.9 81.7 L158.7 81.7 L160.5 81.7 L162.3 82.1 L164.1 82.7 L165.9 83.3 L167.7 83.2 L169.5 83.0 L171.3 82.5 L173.1 82.1 L174.9 82.1 L176.7 82.4 L178.5 82.4 L180.3 82.5 L182.1 82.0 L183.9 81.7 L185.7 81.3 L187.5 81.2 L189.3 81.8 L191.1 82.6 L192.9 82.8 L194.7 82.9 L196.5 82.9 L198.3 82.7 L200.1 82.6 L201.9 82.7 L203.7 83.0 L205.5 83.3 L207.3 83.4 L209.1 83.7 L210.9 83.1 L212.7 81.7 L214.5 81.4 L216.3 81.7 L218.1 82.2 L219.9 82.3 L221.7 82.1 L223.5 81.9 L225.3 81.8 L227.1 82.1 L228.9 82.5 L230.7 83.3 L232.5 83.7 L234.3 83.4 L236.1 83.0 L237.9 82.7 L239.7 82.3 L241.5 82.4 L243.3 82.4 L245.1 82.4 L246.9 82.2 L248.7 81.5 L250.5 80.9 L252.3 80.6 L254.1 80.8 L255.9 81.3 L257.7 81.6 L259.5 82.1 L261.3 82.0 L263.1 81.7 L264.9 81.5 L266.7 81.8 L268.5 82.0 L270.3 82.2 L272.1 82.3 L273.9 82.1 L275.7 81.4 L277.5 80.6 L279.3 80.2 L281.1 80.3 L282.9 80.5 L284.7 80.6 L286.5 80.5 L288.3 80.2 L290.1 80.1 L291.9 80.0 L293.7 80.1 L295.5 80.8 L297.3 81.5 L299.1 81.7 L300.9 81.6 L302.7 81.2 L304.5 80.7 L306.3 80.6 L308.1 80.5 L309.9 79.9 L311.7 78.5 L313.5 78.8 L315.3 79.7 L317.1 79.3 L318.9 79.2 L320.7 79.5 L322.5 79.8 L324.3 80.4 L326.1 80.7 L327.9 80.6 L329.7 80.4 L331.5 80.4 L333.3 80.6 L335.1 81.0" stroke="#f2f2f2" stroke-width="1" fill="none"/><path d="M32.7 72.9 H40.2 L43.2 71.1 H78.2 L82.2 70.1 H132.2 L134.2 69.3 H336.4" stroke="#bcc0e2" stroke-width="0.9" fill="none"/><path d="M32.7 37.2 L33.9 37.1 L35.2 36.0 L36.4 34.2 L37.7 37.2 L38.9 37.8 L40.2 36.1 L41.4 35.7 L42.7 33.9 L43.9 32.1 L45.2 33.9 L46.4 35.4 L47.7 32.6 L48.9 36.3 L50.2 33.6 L51.4 33.0 L52.7 31.7 L53.9 37.0 L55.2 36.5 L56.4 37.1 L57.7 35.6 L58.9 31.8 L60.2 32.7 L61.4 33.8 L62.7 31.8 L63.9 36.3 L65.2 33.8 L66.4 32.1 L67.7 35.6 L68.9 32.3 L70.2 36.4 L71.4 34.4 L72.7 36.0 L73.9 38.3 L75.2 34.0 L76.4 32.4 L77.7 31.2 L78.9 35.9 L80.2 33.1 L81.4 35.8 L82.7 33.0 L83.9 36.9 L85.2 37.3 L86.4 38.1 L87.7 38.7 L88.9 35.2 L90.2 35.7 L91.4 32.2 L92.7 33.5 L93.9 35.7 L95.2 32.4 L96.4 35.8 L97.7 36.2 L98.9 33.4 L100.2 32.5 L101.4 32.7 L102.7 32.3 L103.9 35.7 L105.2 32.7 L106.4 30.0 L107.7 29.7 L108.9 33.3 L110.2 35.5 L111.4 32.9 L112.7 32.3 L113.9 32.5 L115.2 33.6 L116.4 30.6 L117.7 32.2 L118.9 32.2 L120.2 32.5 L121.4 29.8 L122.7 29.2 L123.9 30.1 L125.2 33.6 L126.4 30.8 L127.7 31.7 L128.9 30.1 L130.2 28.6 L131.4 28.0 L132.7 32.2 L133.9 32.8 L135.2 30.5 L136.4 31.8 L137.7 32.0 L138.9 33.3 L140.2 33.8 L141.4 35.9 L142.7 34.3 L143.9 33.8 L145.2 31.6 L146.4 32.9 L147.7 30.8 L148.9 29.7 L150.2 28.7 L151.4 32.2 L152.7 28.7 L153.9 27.4 L155.2 31.5 L156.4 32.1 L157.7 30.5 L158.9 32.2 L160.2 27.9 L161.4 28.2 L162.7 28.5 L163.9 29.4 L165.2 28.1 L166.4 27.3 L167.7 28.8 L168.9 32.4 L170.2 33.7 L171.4 32.6 L172.7 30.8 L173.9 29.2 L175.2 33.0 L176.4 31.3 L177.7 32.2 L178.9 28.3 L180.2 28.6 L181.4 32.4 L182.7 33.0 L183.9 33.6 L185.2 32.1 L186.4 30.9 L187.7 31.6 L188.9 33.3 L190.2 30.5 L191.4 31.3 L192.7 30.0 L193.9 32.6 L195.2 28.7 L196.4 31.9 L197.7 34.2 L198.9 29.2 L200.2 31.6 L201.4 32.4 L202.7 33.8 L203.9 32.5 L205.2 30.4 L206.4 30.9 L207.7 34.2 L208.9 34.6 L210.2 30.2 L211.4 35.5 L212.7 38.1 L213.9 28.5 L215.2 30.9 L216.4 29.6 L217.7 33.7 L218.9 33.3 L220.2 30.1 L221.4 31.9 L222.7 31.1 L223.9 31.9 L225.2 30.5 L226.4 29.9 L227.7 30.0 L228.9 35.9 L230.2 33.4 L231.4 32.9 L232.7 29.9 L233.9 33.2 L235.2 34.8 L236.4 34.6 L237.7 34.7 L238.9 30.1 L240.2 31.9 L241.4 30.0 L242.7 33.7 L243.9 31.0 L245.2 33.6 L246.4 31.4 L247.7 33.6 L248.9 31.8 L250.2 29.8 L251.4 31.5 L252.7 31.3 L253.9 34.8 L255.2 31.9 L256.4 32.6 L257.7 33.0 L258.9 35.4 L260.2 30.9 L261.4 32.9 L262.7 32.8 L263.9 34.1 L265.2 35.7 L266.4 32.2 L267.7 33.8 L268.9 33.1 L270.2 33.1 L271.4 30.2 L272.7 34.1 L273.9 35.8 L275.2 32.5 L276.4 31.6 L277.7 35.4 L278.9 30.9 L280.2 29.8 L281.4 29.6 L282.7 33.9 L283.9 34.5 L285.2 32.7 L286.4 33.4 L287.7 30.0 L288.9 33.0 L290.2 32.4 L291.4 32.7 L292.7 32.1 L293.9 32.0 L295.2 30.9 L296.4 29.7 L297.7 31.7 L298.9 31.0 L300.2 33.6 L301.4 34.7 L302.7 34.4 L303.9 32.8 L305.2 38.9 L306.4 34.4 L307.7 32.4 L308.9 33.4 L310.2 35.6 L311.4 30.8 L312.7 32.2 L313.9 32.6 L315.2 33.9 L316.4 35.2 L317.7 34.9 L318.9 33.9 L320.2 43.3 L321.4 37.1 L322.7 35.1 L323.9 34.3 L325.2 34.1 L326.4 31.5 L327.7 34.9 L328.9 32.5 L330.2 33.3 L331.4 34.7 L332.7 35.8 L333.9 36.2" stroke="#4ad84a" stroke-width="1.0" fill="none"/><path d="M32.7 34.4 L34.1 33.3 L35.4 37.7 L36.8 34.8 L38.1 33.7 L39.5 35.9 L40.8 34.9 L42.2 37.2 L43.5 34.5 L44.9 37.3 L46.2 34.9 L47.6 35.5 L48.9 37.2 L50.3 36.4 L51.6 37.2 L53.0 36.3 L54.3 32.9 L55.7 35.9 L57.0 35.2 L58.4 33.7 L59.7 32.6 L61.1 35.4 L62.4 34.8 L63.8 36.4 L65.1 36.0 L66.5 36.9 L67.8 35.2 L69.2 35.4 L70.5 35.1 L71.9 33.3 L73.2 39.9 L74.6 36.0 L75.9 35.6 L77.3 36.8 L78.6 35.7 L80.0 33.0 L81.3 35.6 L82.7 35.5 L84.0 33.2 L85.4 32.0 L86.7 36.4 L88.1 33.2 L89.4 35.7 L90.8 34.6 L92.1 34.2 L93.5 33.5 L94.8 34.5 L96.2 35.8 L97.5 33.2 L98.9 32.7 L100.2 33.5 L101.6 32.2 L102.9 33.3 L104.3 33.2 L105.6 32.6 L107.0 33.5 L108.3 32.9 L109.7 30.6 L111.0 34.3 L112.4 32.1 L113.7 31.8 L115.1 31.5 L116.4 33.9 L117.8 34.5 L119.1 32.5 L120.5 31.3 L121.8 29.5 L123.2 32.8 L124.5 30.2 L125.9 31.2 L127.2 30.5 L128.6 30.2 L129.9 30.2 L131.3 29.3 L132.6 28.3 L134.0 30.4 L135.3 32.1 L136.7 31.8 L138.0 29.5 L139.4 31.3 L140.7 30.4 L142.1 33.5 L143.4 31.8 L144.8 32.8 L146.1 30.8 L147.5 32.2 L148.8 30.8 L150.2 30.6 L151.5 30.8 L152.9 32.8 L154.2 32.0 L155.6 30.6 L156.9 31.4 L158.3 31.2 L159.6 29.7 L161.0 31.4 L162.3 32.0 L163.7 31.1 L165.0 32.6 L166.4 28.5 L167.7 29.9 L169.1 30.9 L170.4 29.8 L171.8 28.7 L173.1 31.0 L174.5 30.4 L175.8 29.5 L177.2 28.2 L178.5 32.4 L179.9 30.5 L181.2 29.0 L182.6 29.1 L183.9 29.3 L185.3 32.4 L186.6 29.9 L188.0 29.7 L189.3 28.9 L190.7 30.5 L192.0 29.7 L193.4 30.1 L194.7 32.2 L196.1 33.6 L197.4 33.6 L198.8 29.8 L200.1 30.5 L201.5 32.9 L202.8 29.7 L204.2 29.7 L205.5 31.1 L206.9 31.0 L208.2 32.7 L209.6 33.1 L210.9 31.9 L212.3 45.1 L213.6 30.3 L215.0 30.4 L216.3 29.5 L217.7 32.2 L219.0 30.4 L220.4 33.5 L221.7 33.2 L223.1 30.3 L224.4 31.7 L225.8 32.6 L227.1 30.2 L228.5 34.4 L229.8 31.6 L231.2 33.1 L232.5 30.2 L233.9 32.5 L235.2 34.8 L236.6 34.8 L237.9 31.9 L239.3 32.6 L240.6 30.9 L242.0 31.5 L243.3 34.1 L244.7 34.6 L246.0 30.8 L247.4 31.7 L248.7 33.1 L250.1 31.2 L251.4 33.8 L252.8 34.9 L254.1 33.5 L255.5 32.2 L256.8 34.3 L258.2 33.2 L259.5 31.3 L260.9 31.3 L262.2 30.7 L263.6 33.8 L264.9 33.0 L266.3 33.7 L267.6 34.5 L269.0 35.4 L270.3 31.9 L271.7 32.0 L273.0 34.3 L274.4 34.4 L275.7 32.6 L277.1 33.4 L278.4 31.4 L279.8 30.8 L281.1 30.1 L282.5 31.5 L283.8 31.1 L285.2 32.4 L286.5 34.9 L287.9 31.6 L289.2 32.7 L290.6 34.4 L291.9 33.6 L293.3 33.1 L294.6 34.1 L296.0 30.7 L297.3 34.4 L298.7 34.0 L300.0 34.5 L301.4 34.7 L302.7 31.3 L304.1 30.3 L305.4 39.8 L306.8 32.6 L308.1 34.7 L309.5 35.2 L310.8 32.9 L312.2 33.3 L313.5 34.0 L314.9 32.2 L316.2 34.8 L317.6 35.4 L318.9 34.5 L320.3 44.4 L321.6 36.5 L323.0 33.9 L324.3 32.2 L325.7 31.5 L327.0 31.1 L328.4 30.2 L329.7 34.1 L331.1 32.1 L332.4 30.3 L333.8 31.2" stroke="#d0f6d0" stroke-width="0.7" fill="none"/><path d="M32.7 30.4 L33.9 31.7 L35.2 28.2 L36.4 29.8 L37.7 31.6 L38.9 31.9 L40.2 27.0 L41.4 28.9 L42.7 29.0 L43.9 28.2 L45.2 31.1 L46.4 28.7 L47.7 27.6 L48.9 30.6 L50.2 29.1 L51.4 26.5 L52.7 26.0 L53.9 27.0 L55.2 24.1 L56.4 27.1 L57.7 28.4 L58.9 26.5 L60.2 28.8 L61.4 29.7 L62.7 27.3 L63.9 27.5 L65.2 23.7 L66.4 22.4 L67.7 28.2 L68.9 24.9 L70.2 23.8 L71.4 28.1 L72.7 33.2 L73.9 41.7 L75.2 24.5 L76.4 24.2 L77.7 24.3 L78.9 22.7 L80.2 25.8 L81.4 25.0 L82.7 25.5 L83.9 24.2 L85.2 23.4 L86.4 22.7 L87.7 28.1 L88.9 28.4 L90.2 27.1 L91.4 24.0 L92.7 23.5 L93.9 23.2 L95.2 24.4 L96.4 22.9 L97.7 24.0 L98.9 23.8 L100.2 23.6 L101.4 26.6 L102.7 25.9 L103.9 25.8 L105.2 24.9 L106.4 25.9 L107.7 27.6 L108.9 24.8 L110.2 22.5 L111.4 24.8 L112.7 24.4 L113.9 27.0 L115.2 23.0 L116.4 27.2 L117.7 22.1 L118.9 24.3 L120.2 23.8 L121.4 22.6 L122.7 25.9 L123.9 25.0 L125.2 21.0 L126.4 22.1 L127.7 23.0 L128.9 19.4 L130.2 19.0 L131.4 22.4 L132.7 24.0 L133.9 22.5 L135.2 22.0 L136.4 22.5 L137.7 21.0 L138.9 24.8 L140.2 26.2 L141.4 57.2 L142.7 27.8 L143.9 21.5 L145.2 24.6 L146.4 22.1 L147.7 20.1 L148.9 20.3 L150.2 23.9 L151.4 24.1 L152.7 21.9 L153.9 23.7 L155.2 25.1 L156.4 26.7 L157.7 26.2 L158.9 23.5 L160.2 25.5 L161.4 26.7 L162.7 26.6 L163.9 25.8 L165.2 24.6 L166.4 23.9 L167.7 26.0 L168.9 25.0 L170.2 25.4 L171.4 22.3 L172.7 20.7 L173.9 21.7 L175.2 23.9 L176.4 24.4 L177.7 22.0 L178.9 21.4 L180.2 26.4 L181.4 21.6 L182.7 26.4 L183.9 26.3 L185.2 25.0 L186.4 27.6 L187.7 26.0 L188.9 21.2 L190.2 26.5 L191.4 24.0 L192.7 26.9 L193.9 26.8 L195.2 22.3 L196.4 20.8 L197.7 20.3 L198.9 25.3 L200.2 26.4 L201.4 22.9 L202.7 21.4 L203.9 22.8 L205.2 26.0 L206.4 26.3 L207.7 27.2 L208.9 28.0 L210.2 26.8 L211.4 32.2 L212.7 29.1 L213.9 20.6 L215.2 26.1 L216.4 25.5 L217.7 23.5 L218.9 21.8 L220.2 22.8 L221.4 23.1 L222.7 24.2 L223.9 24.1 L225.2 22.5 L226.4 21.3 L227.7 21.9 L228.9 21.6 L230.2 21.3 L231.4 23.4 L232.7 21.9 L233.9 26.1 L235.2 25.2 L236.4 24.5 L237.7 25.5 L238.9 23.1 L240.2 21.2 L241.4 21.2 L242.7 22.9 L243.9 28.2 L245.2 23.8 L246.4 23.0 L247.7 26.6 L248.9 21.8 L250.2 23.8 L251.4 23.7 L252.7 23.1 L253.9 25.9 L255.2 23.1 L256.4 21.3 L257.7 21.8 L258.9 27.3 L260.2 24.2 L261.4 22.0 L262.7 27.3 L263.9 26.2 L265.2 28.0 L266.4 24.2 L267.7 26.7 L268.9 22.0 L270.2 22.4 L271.4 26.2 L272.7 25.1 L273.9 26.7 L275.2 24.3 L276.4 27.1 L277.7 22.4 L278.9 25.1 L280.2 22.7 L281.4 22.3 L282.7 26.8 L283.9 24.6 L285.2 26.8 L286.4 23.7 L287.7 26.0 L288.9 27.7 L290.2 26.1 L291.4 23.2 L292.7 25.5 L293.9 27.9 L295.2 27.3 L296.4 24.9 L297.7 24.1 L298.9 21.9 L300.2 25.9 L301.4 22.7 L302.7 22.4 L303.9 21.1 L305.2 26.3 L306.4 24.6 L307.7 24.3 L308.9 22.5 L310.2 23.7 L311.4 26.2 L312.7 22.3 L313.9 21.8 L315.2 24.3 L316.4 27.3 L317.7 28.0 L318.9 25.8 L320.2 28.2 L321.4 26.7 L322.7 28.4 L323.9 28.1 L325.2 25.6 L326.4 24.1 L327.7 25.2 L328.9 26.7 L330.2 28.4 L331.4 25.4 L332.7 24.9 L333.9 23.5" stroke="#cc5ede" stroke-width="1.0" fill="none"/><path d="M32.7 27.1 L33.9 28.2 L35.2 30.1 L36.4 27.0 L37.7 26.0 L38.9 26.4 L40.2 29.6 L41.4 26.3 L42.7 29.2 L43.9 29.2 L45.2 25.9 L46.4 27.7 L47.7 27.4 L48.9 27.1 L50.2 30.5 L51.4 25.6 L52.7 24.1 L53.9 29.3 L55.2 27.0 L56.4 25.1 L57.7 25.4 L58.9 25.6 L60.2 29.1 L61.4 25.1 L62.7 24.2 L63.9 26.2 L65.2 26.3 L66.4 28.6 L67.7 28.4 L68.9 25.4 L70.2 24.0 L71.4 27.6 L72.7 34.4 L73.9 41.6 L75.2 27.1 L76.4 28.7 L77.7 27.7 L78.9 24.9 L80.2 27.9 L81.4 28.2 L82.7 25.0 L83.9 27.0 L85.2 24.8 L86.4 23.3 L87.7 24.8 L88.9 25.0 L90.2 25.4 L91.4 27.0 L92.7 28.5 L93.9 29.5 L95.2 29.8 L96.4 30.0 L97.7 28.7 L98.9 25.5 L100.2 24.0 L101.4 26.5 L102.7 26.4 L103.9 27.1 L105.2 23.6 L106.4 23.5 L107.7 27.9 L108.9 26.7 L110.2 27.0 L111.4 23.3 L112.7 24.3 L113.9 27.6 L115.2 26.6 L116.4 28.4 L117.7 23.8 L118.9 24.1 L120.2 26.0 L121.4 23.9 L122.7 25.3 L123.9 23.9 L125.2 20.7 L126.4 19.6 L127.7 24.7 L128.9 20.5 L130.2 20.1 L131.4 21.0 L132.7 23.5 L133.9 24.9 L135.2 22.8 L136.4 22.6 L137.7 24.4 L138.9 21.6 L140.2 21.7 L141.4 57.1 L142.7 31.8 L143.9 20.1 L145.2 19.9 L146.4 20.1 L147.7 23.7 L148.9 24.3 L150.2 26.2 L151.4 25.3 L152.7 22.1 L153.9 24.6 L155.2 26.5 L156.4 23.0 L157.7 20.3 L158.9 22.0 L160.2 21.8 L161.4 21.2 L162.7 20.3 L163.9 20.6 L165.2 25.2 L166.4 21.2 L167.7 23.8 L168.9 21.9 L170.2 21.5 L171.4 25.2 L172.7 22.8 L173.9 21.7 L175.2 23.1 L176.4 24.9 L177.7 24.2 L178.9 26.2 L180.2 23.8 L181.4 24.1 L182.7 25.3 L183.9 24.1 L185.2 25.4 L186.4 24.1 L187.7 21.9 L188.9 21.4 L190.2 25.3 L191.4 25.9 L192.7 27.2 L193.9 26.0 L195.2 25.0 L196.4 22.3 L197.7 26.0 L198.9 22.2 L200.2 23.4 L201.4 21.9 L202.7 23.1 L203.9 22.9 L205.2 23.6 L206.4 25.5 L207.7 24.8 L208.9 22.9 L210.2 25.8 L211.4 31.2 L212.7 34.1 L213.9 22.0 L215.2 24.6 L216.4 26.9 L217.7 23.4 L218.9 22.4 L220.2 26.0 L221.4 23.9 L222.7 23.8 L223.9 26.3 L225.2 24.2 L226.4 22.6 L227.7 22.4 L228.9 23.2 L230.2 25.5 L231.4 24.0 L232.7 26.1 L233.9 22.3 L235.2 22.6 L236.4 25.0 L237.7 24.6 L238.9 24.7 L240.2 27.4 L241.4 23.9 L242.7 22.6 L243.9 26.2 L245.2 24.9 L246.4 23.3 L247.7 24.3 L248.9 21.6 L250.2 21.0 L251.4 23.2 L252.7 26.0 L253.9 23.7 L255.2 27.0 L256.4 25.7 L257.7 24.3 L258.9 26.3 L260.2 23.4 L261.4 25.1 L262.7 26.9 L263.9 25.4 L265.2 23.7 L266.4 22.0 L267.7 24.6 L268.9 22.8 L270.2 23.5 L271.4 24.7 L272.7 27.4 L273.9 26.3 L275.2 25.1 L276.4 27.0 L277.7 24.0 L278.9 23.9 L280.2 25.6 L281.4 25.2 L282.7 23.1 L283.9 23.8 L285.2 26.5 L286.4 23.5 L287.7 25.7 L288.9 22.1 L290.2 27.0 L291.4 26.3 L292.7 23.9 L293.9 27.5 L295.2 27.1 L296.4 22.5 L297.7 22.7 L298.9 24.3 L300.2 27.7 L301.4 23.1 L302.7 21.6 L303.9 22.9 L305.2 26.0 L306.4 24.8 L307.7 24.7 L308.9 24.3 L310.2 22.4 L311.4 21.3 L312.7 25.9 L313.9 24.6 L315.2 24.6 L316.4 24.5 L317.7 25.8 L318.9 27.4 L320.2 33.2 L321.4 26.6 L322.7 24.1 L323.9 22.5 L325.2 21.7 L326.4 26.3 L327.7 22.3 L328.9 24.6 L330.2 27.2 L331.4 24.1 L332.7 23.9 L333.9 24.0" stroke="#5ccaf0" stroke-width="0.9" fill="none"/><path d="M32.7 27.9 L34.1 27.9 L35.4 31.0 L36.8 29.4 L38.1 30.1 L39.5 26.7 L40.8 27.9 L42.2 29.9 L43.5 28.6 L44.9 30.5 L46.2 30.6 L47.6 27.8 L48.9 24.9 L50.3 28.3 L51.6 25.7 L53.0 24.2 L54.3 27.7 L55.7 29.1 L57.0 29.3 L58.4 29.9 L59.7 25.7 L61.1 23.9 L62.4 23.6 L63.8 28.1 L65.1 24.3 L66.5 23.5 L67.8 22.5 L69.2 22.5 L70.5 22.5 L71.9 24.3 L73.2 37.7 L74.6 31.5 L75.9 28.1 L77.3 24.9 L78.6 27.7 L80.0 28.0 L81.3 27.2 L82.7 27.1 L84.0 28.1 L85.4 27.3 L86.7 25.1 L88.1 25.1 L89.4 24.6 L90.8 25.3 L92.1 28.7 L93.5 26.5 L94.8 23.9 L96.2 25.5 L97.5 27.7 L98.9 26.3 L100.2 27.3 L101.6 24.1 L102.9 23.1 L104.3 26.1 L105.6 23.4 L107.0 24.1 L108.3 24.6 L109.7 23.6 L111.0 22.5 L112.4 21.9 L113.7 27.0 L115.1 26.7 L116.4 28.0 L117.8 25.6 L119.1 27.2 L120.5 26.9 L121.8 25.1 L123.2 23.9 L124.5 23.2 L125.9 21.2 L127.2 21.2 L128.6 23.3 L129.9 20.9 L131.3 24.0 L132.6 22.9 L134.0 23.2 L135.3 24.5 L136.7 23.8 L138.0 20.9 L139.4 20.8 L140.7 31.8 L142.1 45.4 L143.4 24.4 L144.8 23.7 L146.1 25.7 L147.5 25.2 L148.8 22.5 L150.2 25.5 L151.5 26.0 L152.9 23.6 L154.2 21.0 L155.6 21.7 L156.9 21.1 L158.3 22.0 L159.6 20.8 L161.0 24.0 L162.3 26.3 L163.7 22.6 L165.0 24.9 L166.4 24.4 L167.7 23.7 L169.1 25.9 L170.4 23.6 L171.8 25.5 L173.1 21.6 L174.5 25.8 L175.8 22.6 L177.2 20.8 L178.5 25.2 L179.9 25.5 L181.2 25.3 L182.6 25.8 L183.9 23.8 L185.3 21.9 L186.6 22.5 L188.0 26.2 L189.3 27.3 L190.7 23.4 L192.0 23.7 L193.4 23.8 L194.7 26.3 L196.1 22.0 L197.4 25.5 L198.8 23.2 L200.1 24.3 L201.5 22.2 L202.8 21.5 L204.2 25.7 L205.5 24.7 L206.9 27.0 L208.2 27.0 L209.6 26.4 L210.9 22.5 L212.3 47.5 L213.6 27.1 L215.0 25.1 L216.3 22.2 L217.7 22.1 L219.0 26.6 L220.4 27.6 L221.7 23.9 L223.1 23.3 L224.4 25.4 L225.8 24.8 L227.1 22.9 L228.5 26.8 L229.8 25.8 L231.2 24.1 L232.5 21.8 L233.9 24.0 L235.2 25.9 L236.6 23.2 L237.9 22.0 L239.3 25.2 L240.6 27.1 L242.0 24.6 L243.3 24.5 L244.7 25.4 L246.0 25.0 L247.4 22.7 L248.7 23.0 L250.1 22.6 L251.4 22.5 L252.8 21.9 L254.1 23.4 L255.5 22.8 L256.8 26.1 L258.2 24.1 L259.5 27.1 L260.9 27.0 L262.2 24.0 L263.6 22.6 L264.9 24.6 L266.3 24.5 L267.6 24.8 L269.0 22.7 L270.3 24.4 L271.7 26.0 L273.0 24.7 L274.4 23.4 L275.7 26.7 L277.1 24.1 L278.4 27.3 L279.8 26.4 L281.1 22.4 L282.5 23.8 L283.8 22.5 L285.2 25.7 L286.5 24.5 L287.9 22.4 L289.2 26.6 L290.6 26.8 L291.9 25.8 L293.3 25.4 L294.6 22.5 L296.0 26.8 L297.3 24.1 L298.7 24.7 L300.0 24.6 L301.4 24.5 L302.7 22.0 L304.1 26.2 L305.4 32.4 L306.8 24.2 L308.1 26.6 L309.5 27.2 L310.8 26.5 L312.2 27.4 L313.5 24.5 L314.9 22.5 L316.2 23.3 L317.6 24.9 L318.9 26.3 L320.3 34.1 L321.6 25.8 L323.0 25.5 L324.3 25.8 L325.7 25.4 L327.0 22.2 L328.4 24.3 L329.7 23.4 L331.1 22.0 L332.4 24.6 L333.8 26.6" stroke="#ececf8" stroke-width="0.75" fill="none"/><path d="M334.2 25.5 L335.0 42.5 L335.8 61.5" stroke="#e6e6f6" stroke-width="1.1" fill="none"/><path d="M333.6 24.5 L334.6 40.5" stroke="#c85ad8" stroke-width="0.9" fill="none"/><path d="M335.2 50.5 L336.2 62.5" stroke="#8ce08c" stroke-width="0.8" fill="none"/></svg>
<div class="a" style="left:457.8px;top:127.5px;width:367.5px;height:191.2px;overflow:hidden;">
<div class="a" style="left:1.40px;top:6.30px;width:7.00px;height:7.00px;background:#fff;"></div>
<svg class="a" style="left:2.40px;top:7.50px;" width="5" height="5" viewBox="0 0 5 5"><path d="M0.5 2.4 L1.9 3.9 L4.6 0.6" fill="none" stroke="#1a8a1a" stroke-width="1.1"/></svg>
<span class="a tc" style="left:10.40px;top:4.10px;line-height:12px;color:#d050d8;transform:scaleX(0.919);">CPU Core #3</span>
<div class="a" style="left:57.40px;top:6.30px;width:7.00px;height:7.00px;background:#fff;"></div>
<svg class="a" style="left:58.40px;top:7.50px;" width="5" height="5" viewBox="0 0 5 5"><path d="M0.5 2.4 L1.9 3.9 L4.6 0.6" fill="none" stroke="#1a8a1a" stroke-width="1.1"/></svg>
<span class="a tc" style="left:66.80px;top:4.10px;line-height:12px;color:#f4f4f4;transform:scaleX(0.919);">CPU Core #4</span>
<div class="a" style="left:113.40px;top:6.30px;width:7.00px;height:7.00px;background:#fff;"></div>
<svg class="a" style="left:114.40px;top:7.50px;" width="5" height="5" viewBox="0 0 5 5"><path d="M0.5 2.4 L1.9 3.9 L4.6 0.6" fill="none" stroke="#1a8a1a" stroke-width="1.1"/></svg>
<span class="a tc" style="left:123.20px;top:4.10px;line-height:12px;color:#d83a3a;transform:scaleX(0.932);">GPU Diode</span>
<div class="a" style="left:164.60px;top:6.30px;width:7.00px;height:7.00px;background:#fff;"></div>
<svg class="a" style="left:165.60px;top:7.50px;" width="5" height="5" viewBox="0 0 5 5"><path d="M0.5 2.4 L1.9 3.9 L4.6 0.6" fill="none" stroke="#1a8a1a" stroke-width="1.1"/></svg>
<span class="a tc" style="left:174.80px;top:4.10px;line-height:12px;color:#f0d8b0;transform:scaleX(0.892);">Corsair Force LS SSD</span>
<div class="a" style="left:246.80px;top:6.30px;width:7.00px;height:7.00px;background:#fff;"></div>
<svg class="a" style="left:247.80px;top:7.50px;" width="5" height="5" viewBox="0 0 5 5"><path d="M0.5 2.4 L1.9 3.9 L4.6 0.6" fill="none" stroke="#1a8a1a" stroke-width="1.1"/></svg>
<span class="a tc" style="left:256.80px;top:4.10px;line-height:12px;color:#f4f4f4;transform:scaleX(0.902);">GPU VRM</span>
<div class="a" style="left:294.40px;top:6.30px;width:7.00px;height:7.00px;background:#fff;"></div>
<svg class="a" style="left:295.40px;top:7.50px;" width="5" height="5" viewBox="0 0 5 5"><path d="M0.5 2.4 L1.9 3.9 L4.6 0.6" fill="none" stroke="#1a8a1a" stroke-width="1.1"/></svg>
<span class="a tc" style="left:304.20px;top:4.10px;line-height:12px;color:#2f7fd8;transform:scaleX(0.892);">Corsair Force LS SSD</span>
<span class="a tc" style="left:10.20px;top:13.40px;line-height:12px;color:#fff;transform:scaleX(0.911);">100°C</span>
<span class="a tc" style="left:17.20px;top:166.90px;line-height:12px;color:#fff;transform:scaleX(0.89);">0°C</span>
<span class="a tc" style="left:346.20px;top:51.50px;line-height:12px;color:#d050d8;transform:scaleX(0.943);">75</span>
<span class="a tc" style="left:338.20px;top:54.10px;line-height:12px;color:#5cc6e6;transform:scaleX(0.943);">74</span>
<span class="a tc" style="left:346.20px;top:57.10px;line-height:12px;color:#b8f0b8;transform:scaleX(0.943);">72</span>
<span class="a tc" style="left:338.20px;top:63.30px;line-height:12px;color:#d4d8ec;transform:scaleX(0.943);">68</span>
<span class="a tc" style="left:338.20px;top:74.30px;line-height:12px;color:#fff;transform:scaleX(0.943);">61</span>
<span class="a tc" style="left:338.20px;top:85.90px;line-height:12px;color:#d83a3a;transform:scaleX(0.943);">53</span>
<span class="a tc" style="left:346.20px;top:112.90px;line-height:12px;color:#e6dc6c;transform:scaleX(0.943);">35</span>
<span class="a tc" style="left:346.20px;top:116.90px;line-height:12px;color:#e0a040;transform:scaleX(0.943);">34</span>
<span class="a tc" style="left:338.20px;top:117.10px;line-height:12px;color:#f0f0e0;transform:scaleX(0.943);">33</span>
<span class="a tc" style="left:346.20px;top:121.30px;line-height:12px;color:#3a8ae0;transform:scaleX(0.943);">30</span>
</div>
<svg class="a" style="left:441.40px;top:321.20px;overflow:hidden;" width="383.9" height="191" viewBox="0 0 383.9 191"><rect x="0" y="0" width="383.9" height="191" fill="#000"/><path d="M31.80 22.10H352.40 M31.80 37.21H352.40 M31.80 52.32H352.40 M31.80 67.43H352.40 M31.80 82.54H352.40 M31.80 97.65H352.40 M31.80 112.76H352.40 M31.80 127.87H352.40 M31.80 142.98H352.40 M31.80 158.09H352.40 M31.80 173.20H352.40" stroke="#2e842e" stroke-width="0.8" fill="none"/><path d="M352.70 19.50V173.20 M346.41 19.50V173.20 M340.12 19.50V173.20 M333.83 19.50V173.20 M327.54 19.50V173.20 M321.25 19.50V173.20 M314.96 19.50V173.20 M308.67 19.50V173.20 M302.38 19.50V173.20 M296.09 19.50V173.20 M289.80 19.50V173.20 M283.51 19.50V173.20 M277.22 19.50V173.20 M270.93 19.50V173.20 M264.64 19.50V173.20 M258.35 19.50V173.20 M252.06 19.50V173.20 M245.77 19.50V173.20 M239.48 19.50V173.20 M233.19 19.50V173.20 M226.90 19.50V173.20 M220.61 19.50V173.20 M214.32 19.50V173.20 M208.03 19.50V173.20 M201.74 19.50V173.20 M195.45 19.50V173.20 M189.16 19.50V173.20 M182.87 19.50V173.20 M176.58 19.50V173.20 M170.29 19.50V173.20 M164.00 19.50V173.20 M157.71 19.50V173.20 M151.42 19.50V173.20 M145.13 19.50V173.20 M138.84 19.50V173.20 M132.55 19.50V173.20 M126.26 19.50V173.20 M119.97 19.50V173.20 M113.68 19.50V173.20 M107.39 19.50V173.20 M101.10 19.50V173.20 M94.81 19.50V173.20 M88.52 19.50V173.20 M82.23 19.50V173.20 M75.94 19.50V173.20 M69.65 19.50V173.20 M63.36 19.50V173.20 M57.07 19.50V173.20 M50.78 19.50V173.20 M44.49 19.50V173.20 M38.20 19.50V173.20 M31.80 19.50V173.20" stroke="#3a923a" stroke-width="0.8" fill="none"/><path d="M31.8 173.2 H352.4" stroke="#b81c1c" stroke-width="1" fill="none"/><path d="M52.3 50.8 L52.6 77.3" stroke="#77771e" stroke-width="1.2" fill="none"/><path d="M127.6 60.8 L127.9 106.2" stroke="#77771e" stroke-width="1.2" fill="none"/><path d="M201.5 50.8 L201.8 83.2" stroke="#77771e" stroke-width="1.2" fill="none"/><path d="M274.9 58.8 L275.2 101.8" stroke="#77771e" stroke-width="1.2" fill="none"/><path d="M348.3 63.8 L348.6 103.3" stroke="#77771e" stroke-width="1.2" fill="none"/><path d="M31.8 20.2 L33.0 20.3 L34.2 20.3 L35.4 22.0 L36.6 21.7 L37.8 21.7 L39.0 21.7 L40.2 20.3 L41.4 20.0 L42.6 21.8 L43.8 21.7 L45.0 22.0 L46.2 20.3 L47.4 21.7 L48.6 21.7 L49.8 22.0 L50.8 20.1 L51.7 28.1 L52.1 50.8 L52.6 85.3 L53.3 40.8 L53.9 24.1 L54.5 20.1 L55.0 21.7 L56.2 22.0 L57.4 21.8 L58.6 22.0 L59.8 20.2 L61.0 22.0 L62.2 22.0 L63.4 21.8 L64.6 20.0 L65.8 21.8 L67.0 22.0 L68.2 20.2 L69.4 20.0 L70.6 20.1 L71.8 20.0 L73.0 20.0 L74.2 22.0 L75.4 21.8 L76.6 20.2 L77.8 20.1 L79.0 20.1 L80.2 20.2 L81.4 20.0 L82.6 21.8 L83.8 21.8 L85.0 21.9 L86.2 22.0 L87.4 22.0 L88.6 21.7 L89.8 22.0 L91.0 21.9 L92.2 21.8 L93.4 21.7 L94.6 21.8 L95.8 21.8 L97.0 21.9 L98.2 21.9 L99.4 20.1 L100.6 20.0 L101.8 20.3 L103.0 22.0 L104.2 21.8 L105.4 21.8 L106.6 22.0 L107.8 21.8 L109.0 21.9 L110.2 22.0 L111.4 21.7 L112.6 20.0 L113.8 20.1 L115.0 20.3 L116.2 20.3 L117.4 20.1 L118.6 20.1 L119.8 20.1 L121.0 22.0 L122.2 21.9 L123.4 21.7 L124.6 22.0 L125.8 20.0 L126.1 20.1 L127.0 28.1 L127.4 60.8 L127.9 114.2 L128.6 50.8 L129.2 24.1 L129.8 20.1 L130.3 20.2 L131.5 20.2 L132.7 21.9 L133.9 21.9 L135.1 22.0 L136.3 20.2 L137.5 20.1 L138.7 20.2 L139.9 20.3 L141.1 20.2 L142.3 21.8 L143.5 21.8 L144.7 21.8 L145.9 20.2 L147.1 20.1 L148.3 20.3 L149.5 20.3 L150.7 22.0 L151.9 22.0 L153.1 21.9 L154.3 21.9 L155.5 22.0 L156.7 21.8 L157.9 21.9 L159.1 20.2 L160.3 21.8 L161.5 21.9 L162.7 22.0 L163.9 21.8 L165.1 20.0 L166.3 20.2 L167.5 21.9 L168.7 21.7 L169.9 21.8 L171.1 22.0 L172.3 21.7 L173.5 20.1 L174.7 20.1 L175.9 20.2 L177.1 21.7 L178.3 22.0 L179.5 21.7 L180.7 20.1 L181.9 20.0 L183.1 20.1 L184.3 21.7 L185.5 21.9 L186.7 21.8 L187.9 20.3 L189.1 20.1 L190.3 20.2 L191.5 20.0 L192.7 20.2 L193.9 20.3 L195.1 20.1 L196.3 20.0 L197.5 21.8 L198.7 22.0 L199.9 21.9 L200.0 20.1 L200.9 28.1 L201.3 50.8 L201.8 91.2 L202.5 40.8 L203.1 24.1 L203.7 20.1 L204.2 20.3 L205.4 20.1 L206.6 20.1 L207.8 20.0 L209.0 20.2 L210.2 20.1 L211.4 21.8 L212.6 21.8 L213.8 21.8 L215.0 21.7 L216.2 21.7 L217.4 21.7 L218.6 21.8 L219.8 20.2 L221.0 22.0 L222.2 21.7 L223.4 21.8 L224.6 21.7 L225.8 20.1 L227.0 20.1 L228.2 20.2 L229.4 20.0 L230.6 20.1 L231.8 20.1 L233.0 20.2 L234.2 20.1 L235.4 20.2 L236.6 21.9 L237.8 21.9 L239.0 21.7 L240.2 20.0 L241.4 20.3 L242.6 20.2 L243.8 20.2 L245.0 20.3 L246.2 20.2 L247.4 20.3 L248.6 20.3 L249.8 20.0 L251.0 20.2 L252.2 20.1 L253.4 20.0 L254.6 20.3 L255.8 20.2 L257.0 20.2 L258.2 21.8 L259.4 21.7 L260.6 21.7 L261.8 20.1 L263.0 20.0 L264.2 20.1 L265.4 21.7 L266.6 21.9 L267.8 20.2 L269.0 21.9 L270.2 21.8 L271.4 21.7 L272.6 21.7 L273.4 20.1 L274.3 28.1 L274.7 58.8 L275.2 109.8 L275.9 48.8 L276.5 24.1 L277.1 20.1 L277.6 21.7 L278.8 21.9 L280.0 20.2 L281.2 21.9 L282.4 22.0 L283.6 21.7 L284.8 21.9 L286.0 21.8 L287.2 21.8 L288.4 20.3 L289.6 21.7 L290.8 21.9 L292.0 21.9 L293.2 20.2 L294.4 20.1 L295.6 20.1 L296.8 20.2 L298.0 22.0 L299.2 21.8 L300.4 21.8 L301.6 21.9 L302.8 21.7 L304.0 20.0 L305.2 21.7 L306.4 22.0 L307.6 21.8 L308.8 21.8 L310.0 20.0 L311.2 20.0 L312.4 21.9 L313.6 21.7 L314.8 21.7 L316.0 22.0 L317.2 20.3 L318.4 21.8 L319.6 21.7 L320.8 21.8 L322.0 21.9 L323.2 20.1 L324.4 21.9 L325.6 22.0 L326.8 21.8 L328.0 20.2 L329.2 20.2 L330.4 20.1 L331.6 21.7 L332.8 21.7 L334.0 20.3 L335.2 20.1 L336.4 20.1 L337.6 20.3 L338.8 20.1 L340.0 21.7 L341.2 22.0 L342.4 22.0 L343.6 20.2 L344.8 22.0 L346.0 21.9 L346.8 20.1 L347.7 28.1 L348.1 63.8 L348.6 111.3 L349.3 53.8 L349.9 24.1 L350.5 20.1 L351.0 21.7 L352.2 20.1" stroke="#d8d83c" stroke-width="0.8" fill="none" stroke-linejoin="round"/></svg>
<span class="a tc" style="left:530.00px;top:325.50px;line-height:12px;color:#e0e040;transform:scaleX(0.897);">CPU Usage</span>
<span class="a tc" style="left:568.40px;top:325.30px;line-height:12px;color:#f0f0f0;transform:scaleX(0.895);">|</span>
<span class="a tc" style="left:574.80px;top:325.50px;line-height:12px;color:#e02020;transform:scaleX(0.959);">CPU Throttling (max: 10%) - Overheating Detected!</span>
<span class="a tc" style="left:453.80px;top:335.20px;line-height:12px;color:#fff;transform:scaleX(0.926);">100%</span>
<span class="a tc" style="left:461.40px;top:488.60px;line-height:12px;color:#fff;transform:scaleX(0.913);">0%</span>
<span class="a tc" style="left:796.00px;top:335.20px;line-height:12px;color:#e0e040;transform:scaleX(0.926);">100%</span>
<span class="a tc" style="left:796.00px;top:488.60px;line-height:12px;color:#e02020;transform:scaleX(0.913);">0%</span>
<span class="a t" style="left:441.60px;top:523.30px;line-height:12px;transform:scaleX(0.928);">Remaining Battery:</span>
<div class="a" style="left:509.60px;top:521.40px;width:50.60px;height:14.60px;background:#000;"></div>
<span class="a tc" style="left:517.60px;top:523.00px;line-height:12px;color:#22c422;transform:scaleX(0.998);-webkit-text-stroke-width:0.35px;">No battery</span>
<span class="a t" style="left:578.00px;top:523.30px;line-height:12px;transform:scaleX(0.928);">Test Started:</span>
<div class="a" style="left:622.60px;top:521.40px;width:88.60px;height:14.60px;background:#000;"></div>
<span class="a t" style="left:729.00px;top:523.30px;line-height:12px;transform:scaleX(0.904);">Elapsed Time:</span>
<div class="a" style="left:780.00px;top:521.40px;width:50.40px;height:14.60px;background:#000;"></div>
<div class="a tb" style="left:432.4px;top:551.2px;width:45.4px;height:12.8px;background:#e3e3e3;border:0.9px solid #aeaeae;text-align:center;line-height:11.6px;color:#111;"><span style="display:inline-block;transform:scaleX(0.931);">Start</span></div>
<div class="a tb" style="left:483.2px;top:551.2px;width:45.4px;height:12.8px;background:#d2d2d2;border:0.9px solid #c2c2c2;text-align:center;line-height:11.6px;color:#9a9a9a;"><span style="display:inline-block;transform:scaleX(0.945);">Stop</span></div>
<div class="a tb" style="left:548.2px;top:551.2px;width:45.8px;height:12.8px;background:#e3e3e3;border:0.9px solid #aeaeae;text-align:center;line-height:11.6px;color:#111;"><span style="display:inline-block;transform:scaleX(0.892);">Clear</span></div>
<div class="a tb" style="left:599.2px;top:551.2px;width:45.8px;height:12.8px;background:#e3e3e3;border:0.9px solid #aeaeae;text-align:center;line-height:11.6px;color:#111;"><span style="display:inline-block;transform:scaleX(0.852);">Save</span></div>
<div class="a tb" style="left:665px;top:551.2px;width:45.6px;height:12.8px;background:#e3e3e3;border:0.9px solid #aeaeae;text-align:center;line-height:11.6px;color:#111;"><span style="display:inline-block;transform:scaleX(0.866);">CPUID</span></div>
<div class="a tb" style="left:716px;top:551.2px;width:45.4px;height:12.8px;background:#e3e3e3;border:0.9px solid #aeaeae;text-align:center;line-height:11.6px;color:#111;"><span style="display:inline-block;transform:scaleX(0.902);">Preferences</span></div>
<div class="a tb" style="left:789px;top:551.2px;width:45.6px;height:12.8px;background:#e3e3e3;border:0.9px solid #aeaeae;text-align:center;line-height:11.6px;color:#111;"><span style="display:inline-block;transform:scaleX(0.891);">Close</span></div>
<div class="a" style="left:845.00px;top:38.20px;width:329.30px;height:518.80px;background:#454545;background-image:repeating-linear-gradient(0deg,rgba(255,255,255,0.055) 0,rgba(255,255,255,0.055) 1px,transparent 1px,transparent 2px);"></div>
<div class="a" style="left:845.00px;top:38.20px;width:329.30px;height:31.60px;background:#ffffff;"></div>
<svg class="a" style="left:850.00px;top:42.40px;" width="11" height="11" viewBox="0 0 11 11"><rect x="3.2" y="0.4" width="4.6" height="3" fill="#222"/><rect x="2" y="3" width="7" height="2.2" fill="#444"/><circle cx="3" cy="7.6" r="2.8" fill="#1a1a1a"/><circle cx="8" cy="7.6" r="2.8" fill="#1a1a1a"/><circle cx="2.8" cy="7.8" r="1.2" fill="#eee"/><circle cx="8.4" cy="8.2" r="1.3" fill="#c82020"/></svg>
<span class="a tt" style="left:863.00px;top:42.20px;line-height:12px;color:#a8a8a8;transform:scaleX(0.871);">Speccy</span>
<div class="a" style="left:1099.00px;top:47.20px;width:6.00px;height:0.90px;background:#8a8a8a;"></div>
<div class="a" style="left:1127.00px;top:44.00px;width:6.60px;height:6.60px;border:0.9px solid #a6a6a6;"></div>
<svg class="a" style="left:1156.00px;top:44.00px;" width="7" height="7" viewBox="0 0 7 7"><path d="M0.3 0.3 L6.7 6.7 M6.7 0.3 L0.3 6.7" stroke="#9c9c9c" stroke-width="0.9"/></svg>
<span class="a tm" style="left:849.60px;top:57.60px;line-height:12px;color:#707070;transform:scaleX(0.875);">File</span>
<span class="a tm" style="left:869.00px;top:57.60px;line-height:12px;color:#707070;transform:scaleX(0.925);">View</span>
<span class="a tm" style="left:894.00px;top:57.60px;line-height:12px;color:#707070;transform:scaleX(0.946);">Help</span>
<div class="a" style="left:850.40px;top:75.00px;width:102.20px;height:193.60px;background:#515151;border:0.9px solid #5f5f5f;border-radius:4px;"></div>
<svg class="a" style="left:860.60px;top:83.50px;" width="10" height="10" viewBox="0 0 10 10"><rect x="1.4" y="1" width="7.2" height="8.6" rx="0.8" fill="#f4f4f4" stroke="#b04a2a" stroke-width="0.7"/><rect x="3.4" y="0.2" width="3.2" height="1.8" fill="#c8a060"/><rect x="2.8" y="3.6" width="4.4" height="3.6" fill="#7ac0e8"/></svg>
<span class="a spn" style="left:876.40px;top:83.00px;line-height:12px;transform:scaleX(1.03);">Summary</span>
<svg class="a" style="left:860.60px;top:99.25px;" width="10" height="10" viewBox="0 0 10 10"><path d="M1 2.2 Q3 1 4.6 2.2 L4.2 5 Q2.6 3.8 0.6 5 Z" fill="#e0502a"/><path d="M5.4 2.4 Q7.4 3.4 9.4 2.2 L9 5 Q7 6.2 5 5.2 Z" fill="#7ac03a"/><path d="M0.4 5.8 Q2.4 4.6 4 5.8 L3.6 8.6 Q2 7.4 0 8.6 Z" fill="#3a8ae0"/><path d="M4.8 6 Q6.8 7 8.8 5.8 L8.4 8.6 Q6.4 9.8 4.4 8.8 Z" fill="#f0c020"/></svg>
<span class="a spn" style="left:876.40px;top:98.75px;line-height:12px;transform:scaleX(1.03);">Operating System</span>
<svg class="a" style="left:860.60px;top:115.00px;" width="10" height="10" viewBox="0 0 10 10"><rect x="0.8" y="1" width="8.4" height="8" fill="#f0f0f0"/><rect x="2.6" y="2.8" width="4.8" height="4.4" fill="#3a3a3a"/></svg>
<span class="a spn" style="left:876.40px;top:114.50px;line-height:12px;color:#c4d4ec;transform:scaleX(1.03);">CPU</span>
<svg class="a" style="left:860.60px;top:130.75px;" width="10" height="10" viewBox="0 0 10 10"><rect x="0" y="3" width="10" height="4.6" fill="#b8c820"/><rect x="1" y="2.4" width="1.6" height="3" fill="#1a1a1a"/><rect x="3.4" y="2.4" width="1.6" height="3" fill="#1a1a1a"/><rect x="5.8" y="2.4" width="1.6" height="3" fill="#1a1a1a"/><rect x="8" y="2.4" width="1.4" height="3" fill="#1a1a1a"/></svg>
<span class="a spn" style="left:876.40px;top:130.25px;line-height:12px;transform:scaleX(1.03);">RAM</span>
<svg class="a" style="left:860.60px;top:146.50px;" width="10" height="10" viewBox="0 0 10 10"><rect x="0.6" y="0.8" width="8.8" height="8.4" fill="#3aa03a"/><rect x="1.8" y="2" width="3" height="3" fill="#b8e0a0"/><rect x="5.8" y="2" width="2.4" height="5.4" fill="#8ad07a"/><rect x="1.8" y="6.2" width="3" height="1.6" fill="#d8d060"/></svg>
<span class="a spn" style="left:876.40px;top:146.00px;line-height:12px;transform:scaleX(1.03);">Motherboard</span>
<svg class="a" style="left:860.60px;top:162.25px;" width="10" height="10" viewBox="0 0 10 10"><rect x="0.4" y="1" width="9.2" height="6.4" fill="#1a1a1a" stroke="#9a9a9a" stroke-width="0.6"/><rect x="1.4" y="2" width="7.2" height="4.2" fill="#3a9ad0"/><rect x="1.4" y="4.4" width="7.2" height="1.8" fill="#4ab04a"/><rect x="3" y="8" width="4" height="1.2" fill="#bbb"/></svg>
<span class="a spn" style="left:876.40px;top:161.75px;line-height:12px;transform:scaleX(1.03);">Graphics</span>
<svg class="a" style="left:860.60px;top:178.00px;" width="10" height="10" viewBox="0 0 10 10"><rect x="0.8" y="0.8" width="8.4" height="8.4" rx="1" fill="#d8d8d8" stroke="#8a8a8a" stroke-width="0.6"/><circle cx="5" cy="4.6" r="2.6" fill="#f4f4f4" stroke="#777" stroke-width="0.6"/><circle cx="5" cy="4.6" r="0.8" fill="#555"/></svg>
<span class="a spn" style="left:876.40px;top:177.50px;line-height:12px;transform:scaleX(1.03);">Storage</span>
<svg class="a" style="left:860.60px;top:193.75px;" width="10" height="10" viewBox="0 0 10 10"><circle cx="5" cy="5" r="4.4" fill="#ececec"/><circle cx="5" cy="5" r="1.6" fill="#333"/></svg>
<span class="a spn" style="left:876.40px;top:193.25px;line-height:12px;transform:scaleX(1.03);">Optical Drives</span>
<svg class="a" style="left:860.60px;top:209.50px;" width="10" height="10" viewBox="0 0 10 10"><circle cx="5" cy="5" r="4.4" fill="#1a1a1a"/><circle cx="5" cy="5" r="3" fill="#c8a030"/><circle cx="5" cy="5" r="1.3" fill="#3a2a10"/></svg>
<span class="a spn" style="left:876.40px;top:209.00px;line-height:12px;transform:scaleX(1.03);">Audio</span>
<svg class="a" style="left:860.60px;top:225.25px;" width="10" height="10" viewBox="0 0 10 10"><path d="M2.4 3.4 Q2.4 0.6 5 0.6 Q7.6 0.6 7.6 3.4 L7.6 6.6 Q7.6 9.4 5 9.4 Q2.4 9.4 2.4 6.6 Z" fill="#f2f2f2"/><path d="M5 0.8 V4 M2.6 4 H7.4" stroke="#999" stroke-width="0.6"/></svg>
<span class="a spn" style="left:876.40px;top:224.75px;line-height:12px;transform:scaleX(1.03);">Peripherals</span>
<svg class="a" style="left:860.60px;top:241.00px;" width="10" height="10" viewBox="0 0 10 10"><rect x="0.4" y="1.4" width="9.2" height="7.6" fill="#4a8a2a"/><rect x="1.4" y="2.4" width="3" height="2.4" fill="#d8d860"/><rect x="5.4" y="2.6" width="3.4" height="3.4" fill="#c8c8c8"/><rect x="1.4" y="6" width="7" height="1.6" fill="#e8e8a0"/></svg>
<span class="a spn" style="left:876.40px;top:240.50px;line-height:12px;transform:scaleX(1.03);">Network</span>
<div class="a" style="left:960.40px;top:75.00px;width:206.80px;height:454.60px;background:#515151;border:0.9px solid #5f5f5f;border-radius:4px;"></div>
<div class="a" style="left:961.4px;top:76px;width:194.2px;height:442.4px;overflow:hidden;">
<svg class="a" style="left:9.20px;top:8.00px;" width="10" height="10" viewBox="0 0 10 10"><rect x="0.6" y="0.8" width="8.8" height="8.4" fill="#3aa03a"/><rect x="1.8" y="2" width="3" height="3" fill="#b8e0a0"/><rect x="5.8" y="2" width="2.4" height="5.4" fill="#8ad07a"/><rect x="1.8" y="6.2" width="3" height="1.6" fill="#d8d060"/></svg>
<span class="a spn" style="left:24.60px;top:6.90px;line-height:12px;transform:scaleX(1.03);">Motherboard</span>
<span class="a sp" style="left:37.60px;top:17.00px;line-height:12px;transform:scaleX(1.03);">Manufacturer</span>
<span class="a sp" style="left:122.60px;top:17.00px;line-height:12px;transform:scaleX(1.1);">ASUSTeK COMPUTER INC.</span>
<span class="a sp" style="left:37.60px;top:25.17px;line-height:12px;transform:scaleX(1.03);">Model</span>
<span class="a sp" style="left:122.60px;top:25.17px;line-height:12px;transform:scaleX(1.1);">Z97-K (SOCKET 1150)</span>
<span class="a sp" style="left:37.60px;top:33.34px;line-height:12px;transform:scaleX(1.03);">Version</span>
<span class="a sp" style="left:122.60px;top:33.34px;line-height:12px;transform:scaleX(1.03);">Rev X.0x</span>
<span class="a sp" style="left:37.60px;top:41.51px;line-height:12px;transform:scaleX(1.03);">Chipset Vendor</span>
<span class="a sp" style="left:122.60px;top:41.51px;line-height:12px;transform:scaleX(1.03);">Intel</span>
<span class="a sp" style="left:37.60px;top:49.68px;line-height:12px;transform:scaleX(1.03);">Chipset Model</span>
<span class="a sp" style="left:122.60px;top:49.68px;line-height:12px;transform:scaleX(1.03);">Haswell</span>
<span class="a sp" style="left:37.60px;top:57.85px;line-height:12px;transform:scaleX(1.03);">Chipset Revision</span>
<span class="a sp" style="left:122.60px;top:57.85px;line-height:12px;transform:scaleX(1.03);">06</span>
<span class="a sp" style="left:37.60px;top:66.02px;line-height:12px;transform:scaleX(1.03);">Southbridge Vendor</span>
<span class="a sp" style="left:122.60px;top:66.02px;line-height:12px;transform:scaleX(1.03);">Intel</span>
<span class="a sp" style="left:37.60px;top:74.19px;line-height:12px;transform:scaleX(1.03);">Southbridge Model</span>
<span class="a sp" style="left:122.60px;top:74.19px;line-height:12px;transform:scaleX(1.03);">Z97</span>
<span class="a sp" style="left:37.60px;top:82.36px;line-height:12px;transform:scaleX(1.03);">Southbridge Revision</span>
<span class="a sp" style="left:122.60px;top:82.36px;line-height:12px;transform:scaleX(1.03);">00</span>
<span class="a sp" style="left:37.60px;top:90.53px;line-height:12px;transform:scaleX(1.03);">System Temperature</span>
<span class="a sp" style="left:122.60px;top:90.50px;line-height:12px;color:#c83a2c;transform:scaleX(1.03);">111 °C</span>
<div class="a" style="left:154.00px;top:92.60px;width:6.60px;height:6.60px;background:#3ce03c;"></div>
<div class="a" style="left:6.60px;top:100.20px;width:44.40px;height:126.40px;background:#000;border:0.9px solid #a8a8a8;"></div>
<svg class="a" style="left:18.70px;top:105.50px;" width="21.4" height="106.8" viewBox="0 0 21.4 106.8"><rect x="0" y="0" width="21.4" height="106.8" fill="#21d421"/><path d="M0 2.43H21.4 M0 4.86H21.4 M0 7.29H21.4 M0 9.72H21.4 M0 12.15H21.4 M0 14.58H21.4 M0 17.01H21.4 M0 19.44H21.4 M0 21.87H21.4 M0 24.30H21.4 M0 26.73H21.4 M0 29.16H21.4 M0 31.59H21.4 M0 34.02H21.4 M0 36.45H21.4 M0 38.88H21.4 M0 41.31H21.4 M0 43.74H21.4 M0 46.17H21.4 M0 48.60H21.4 M0 51.03H21.4 M0 53.46H21.4 M0 55.89H21.4 M0 58.32H21.4 M0 60.75H21.4 M0 63.18H21.4 M0 65.61H21.4 M0 68.04H21.4 M0 70.47H21.4 M0 72.90H21.4 M0 75.33H21.4 M0 77.76H21.4 M0 80.19H21.4 M0 82.62H21.4 M0 85.05H21.4 M0 87.48H21.4 M0 89.91H21.4 M0 92.34H21.4 M0 94.77H21.4 M0 97.20H21.4 M0 99.63H21.4 M0 102.06H21.4 M0 104.49H21.4" stroke="#13a113" stroke-width="0.55"/><rect x="10.1" y="0" width="1" height="106.8" fill="#0c4a0c"/></svg>
<span class="a sp" style="left:16.00px;top:212.80px;line-height:12px;color:#2ccc2c;font-family:'DejaVu Sans',sans-serif;font-size:7.2px;letter-spacing:0.1px;-webkit-text-stroke-width:0;">111 °C</span>
<svg class="a" style="left:51.60px;top:100.20px;" width="129.6" height="126.4" viewBox="0 0 129.6 126.4"><rect x="0" y="0" width="129.6" height="126.4" fill="#000" stroke="#a8a8a8" stroke-width="0.9"/><path d="M0.5 2.80H129.1 M0.5 10.44H129.1 M0.5 18.08H129.1 M0.5 25.72H129.1 M0.5 33.36H129.1 M0.5 41.00H129.1 M0.5 48.64H129.1 M0.5 56.28H129.1 M0.5 63.92H129.1 M0.5 71.56H129.1 M0.5 79.20H129.1 M0.5 86.84H129.1 M0.5 94.48H129.1 M0.5 102.12H129.1 M0.5 109.76H129.1 M0.5 117.40H129.1 M0.5 125.04H129.1 M4.60 0.5V125.9 M12.24 0.5V125.9 M19.88 0.5V125.9 M27.52 0.5V125.9 M35.16 0.5V125.9 M42.80 0.5V125.9 M50.44 0.5V125.9 M58.08 0.5V125.9 M65.72 0.5V125.9 M73.36 0.5V125.9 M81.00 0.5V125.9 M88.64 0.5V125.9 M96.28 0.5V125.9 M103.92 0.5V125.9 M111.56 0.5V125.9 M119.20 0.5V125.9 M126.84 0.5V125.9" stroke="#1c7c4e" stroke-width="0.72" fill="none"/><path d="M2 2.2 H128.1" stroke="#2f9a46" stroke-width="1.1" fill="none"/><path d="M92 1 L99 1 L101 3" stroke="#ddd" stroke-width="0.7" fill="none"/></svg>
<svg class="a" style="left:40.00px;top:236.00px;" width="4.4" height="3" viewBox="0 0 4.4 3"><path d="M0 0 L4.4 0 L2.2 2.8 Z" fill="#6ab4e8"/></svg>
<span class="a spn" style="left:48.00px;top:230.90px;line-height:12px;transform:scaleX(1.03);">BIOS</span>
<span class="a sp" style="left:50.20px;top:240.10px;line-height:12px;transform:scaleX(1.03);">Brand</span>
<span class="a sp" style="left:86.20px;top:240.10px;line-height:12px;transform:scaleX(1.03);">American Megatrends Inc.</span>
<span class="a sp" style="left:50.20px;top:248.47px;line-height:12px;transform:scaleX(1.03);">Version</span>
<span class="a sp" style="left:86.20px;top:248.47px;line-height:12px;transform:scaleX(1.03);">2604</span>
<span class="a sp" style="left:50.20px;top:256.84px;line-height:12px;transform:scaleX(1.03);">Date</span>
<span class="a sp" style="left:86.20px;top:256.84px;line-height:12px;transform:scaleX(1.03);">20.05.2015</span>
<svg class="a" style="left:40.00px;top:271.60px;" width="4.4" height="3" viewBox="0 0 4.4 3"><path d="M0 0 L4.4 0 L2.2 2.8 Z" fill="#6ab4e8"/></svg>
<span class="a spn" style="left:48.00px;top:266.50px;line-height:12px;transform:scaleX(1.03);">Voltage</span>
<span class="a sp" style="left:50.20px;top:275.40px;line-height:12px;transform:scaleX(1.03);">+5V</span>
<span class="a sp" style="left:84.40px;top:275.40px;line-height:12px;transform:scaleX(1.03);">5.080 V</span>
<span class="a sp" style="left:50.20px;top:283.60px;line-height:12px;transform:scaleX(1.03);">+3.3V</span>
<span class="a sp" style="left:84.40px;top:283.60px;line-height:12px;transform:scaleX(1.03);">3.376 V</span>
<span class="a sp" style="left:50.20px;top:291.80px;line-height:12px;transform:scaleX(1.03);">+12V</span>
<span class="a sp" style="left:84.40px;top:291.80px;line-height:12px;transform:scaleX(1.03);">12.096 V</span>
<span class="a sp" style="left:50.20px;top:300.00px;line-height:12px;transform:scaleX(1.03);">VIN3</span>
<span class="a sp" style="left:84.40px;top:300.00px;line-height:12px;transform:scaleX(1.03);">0.152 V</span>
<span class="a sp" style="left:50.20px;top:308.20px;line-height:12px;transform:scaleX(1.03);">VIN4</span>
<span class="a sp" style="left:84.40px;top:308.20px;line-height:12px;transform:scaleX(1.03);">0.304 V</span>
<span class="a sp" style="left:50.20px;top:316.40px;line-height:12px;transform:scaleX(1.03);">VCORE</span>
<span class="a sp" style="left:84.40px;top:316.40px;line-height:12px;transform:scaleX(1.03);">0.880 V</span>
<svg class="a" style="left:40.00px;top:331.00px;" width="4.4" height="3" viewBox="0 0 4.4 3"><path d="M0 0 L4.4 0 L2.2 2.8 Z" fill="#6ab4e8"/></svg>
<span class="a spn" style="left:48.00px;top:325.90px;line-height:12px;transform:scaleX(1.03);">PCI Data</span>
<svg class="a" style="left:52.40px;top:340.50px;" width="4.4" height="3" viewBox="0 0 4.4 3"><path d="M0 0 L4.4 0 L2.2 2.8 Z" fill="#6ab4e8"/></svg>
<span class="a spn" style="left:60.40px;top:335.40px;line-height:12px;transform:scaleX(1.03);">Slot PCI-E</span>
<span class="a sp" style="left:62.60px;top:344.60px;line-height:12px;transform:scaleX(1.03);">Slot Type</span>
<span class="a sp" style="left:130.00px;top:344.60px;line-height:12px;transform:scaleX(1.03);">PCI-E</span>
<span class="a sp" style="left:62.60px;top:352.76px;line-height:12px;transform:scaleX(1.03);">Slot Usage</span>
<span class="a sp" style="left:130.00px;top:352.76px;line-height:12px;transform:scaleX(1.03);">In Use</span>
<span class="a sp" style="left:62.60px;top:360.92px;line-height:12px;transform:scaleX(1.03);">Data lanes</span>
<span class="a sp" style="left:130.00px;top:360.92px;line-height:12px;transform:scaleX(1.03);">x16</span>
<span class="a sp" style="left:62.60px;top:369.08px;line-height:12px;transform:scaleX(1.03);">Slot Designation</span>
<span class="a sp" style="left:130.00px;top:369.08px;line-height:12px;transform:scaleX(1.03);">PCIEX16_1</span>
<span class="a sp" style="left:62.60px;top:377.24px;line-height:12px;transform:scaleX(1.03);">Characteristics</span>
<span class="a sp" style="left:130.00px;top:377.24px;line-height:12px;transform:scaleX(1.03);">3.3V, Shared, PME</span>
<span class="a sp" style="left:62.60px;top:385.40px;line-height:12px;transform:scaleX(1.03);">Slot Number</span>
<span class="a sp" style="left:130.00px;top:385.40px;line-height:12px;transform:scaleX(1.03);">0</span>
<svg class="a" style="left:52.40px;top:400.00px;" width="4.4" height="3" viewBox="0 0 4.4 3"><path d="M0 0 L4.4 0 L2.2 2.8 Z" fill="#6ab4e8"/></svg>
<span class="a spn" style="left:60.40px;top:394.90px;line-height:12px;transform:scaleX(1.03);">Slot PCI-E</span>
<span class="a sp" style="left:62.60px;top:404.30px;line-height:12px;transform:scaleX(1.03);">Slot Type</span>
<span class="a sp" style="left:130.00px;top:404.30px;line-height:12px;transform:scaleX(1.03);">PCI-E</span>
<span class="a sp" style="left:62.60px;top:412.42px;line-height:12px;transform:scaleX(1.03);">Slot Usage</span>
<span class="a sp" style="left:130.00px;top:412.42px;line-height:12px;transform:scaleX(1.03);">Available</span>
<span class="a sp" style="left:62.60px;top:420.54px;line-height:12px;transform:scaleX(1.03);">Data lanes</span>
<span class="a sp" style="left:130.00px;top:420.54px;line-height:12px;transform:scaleX(1.03);">x1</span>
<span class="a sp" style="left:62.60px;top:428.66px;line-height:12px;transform:scaleX(1.03);">Slot Designation</span>
<span class="a sp" style="left:130.00px;top:428.66px;line-height:12px;transform:scaleX(1.03);">PCIEX1_1</span>
<span class="a sp" style="left:62.60px;top:436.78px;line-height:12px;transform:scaleX(1.03);">Characteristics</span>
<span class="a sp" style="left:130.00px;top:436.78px;line-height:12px;transform:scaleX(1.03);">3.3V, Shared, PME</span>
</div>
<div class="a" style="left:1155.60px;top:77.60px;width:10.80px;height:441.00px;background:#4f4f4f;"></div>
<div class="a" style="left:1155.60px;top:77.60px;width:10.80px;height:10.40px;background:#ffffff;"></div>
<svg class="a" style="left:1158.00px;top:80.60px;" width="6" height="4" viewBox="0 0 6 4"><path d="M0.5 3.4 L3 0.8 L5.5 3.4" fill="none" stroke="#222" stroke-width="1.1"/></svg>
<div class="a" style="left:1155.60px;top:88.00px;width:10.80px;height:262.40px;background:#d4d4d4;"></div>
<div class="a" style="left:1155.60px;top:350.40px;width:10.80px;height:1.60px;background:#f4f4f4;"></div>
<div class="a" style="left:1155.60px;top:506.60px;width:10.80px;height:11.40px;background:#ffffff;"></div>
<svg class="a" style="left:1158.00px;top:510.60px;" width="6" height="4" viewBox="0 0 6 4"><path d="M0.5 0.6 L3 3.2 L5.5 0.6" fill="none" stroke="#222" stroke-width="1.1"/></svg>
<div class="a" style="left:961.40px;top:518.40px;width:193.60px;height:10.60px;background:#ffffff;"></div>
<div class="a" style="left:973.00px;top:518.40px;width:152.00px;height:10.60px;background:#d2d2d2;"></div>
<div class="a" style="left:1125.00px;top:518.40px;width:18.00px;height:10.60px;background:#5a5a5a;"></div>
<svg class="a" style="left:964.40px;top:520.60px;" width="4" height="6" viewBox="0 0 4 6"><path d="M3.4 0.5 L0.8 3 L3.4 5.5" fill="none" stroke="#222" stroke-width="1.1"/></svg>
<svg class="a" style="left:1147.00px;top:520.60px;" width="4" height="6" viewBox="0 0 4 6"><path d="M0.6 0.5 L3.2 3 L0.6 5.5" fill="none" stroke="#222" stroke-width="1.1"/></svg>
<span class="a sp" style="left:849.00px;top:542.60px;line-height:12px;color:#9c9c9c;transform:scaleX(1.03);">v1.32.740</span>
<span class="a mx" style="left:1097.00px;top:542.20px;line-height:12px;color:#9a9a9a;font-size:8.3px;letter-spacing:-0.15px;">Check for updates...</span>
<div class="a" style="left:1166.40px;top:553.40px;width:1.00px;height:1.00px;background:#888;"></div>
<div class="a" style="left:1168.40px;top:553.40px;width:1.00px;height:1.00px;background:#888;"></div>
<div class="a" style="left:1170.40px;top:553.40px;width:1.00px;height:1.00px;background:#888;"></div>
<div class="a" style="left:1168.40px;top:551.40px;width:1.00px;height:1.00px;background:#888;"></div>
<div class="a" style="left:1170.40px;top:551.40px;width:1.00px;height:1.00px;background:#888;"></div>
<div class="a" style="left:1170.40px;top:549.40px;width:1.00px;height:1.00px;background:#888;"></div>
</div>
</body></html>
